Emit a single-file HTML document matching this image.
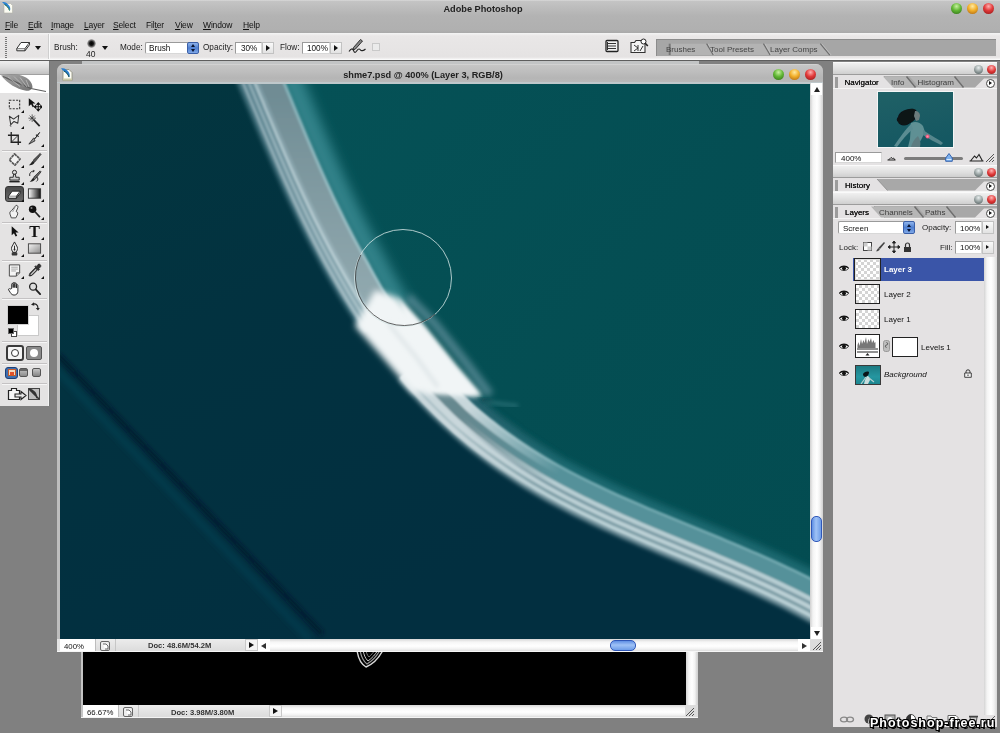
<!DOCTYPE html>
<html><head><meta charset="utf-8">
<style>
*{box-sizing:border-box;margin:0;padding:0}
html,body{width:1000px;height:733px;overflow:hidden;background:#808080;font-family:"Liberation Sans",sans-serif;font-size:10px;color:#111}
.a{position:absolute}
#top{left:0;top:0;width:1000px;height:33px;background:linear-gradient(#dadada 0,#c4c4c4 1.5px,#bcbcbc 8px,#b3b3b3 16px,#b0b0b0 30px,#a9a9a9 33px)}
#apptitle{left:383px;top:3.5px;width:200px;text-align:center;font-weight:bold;font-size:9.2px;color:#222}
.tl{width:11px;height:11px;border-radius:50%}
.tl.g{background:radial-gradient(circle at 50% 30%,#c8f0a0 0,#62b836 45%,#2c6a14 100%)}
.tl.y{background:radial-gradient(circle at 50% 30%,#ffe9a0 0,#f2b02c 45%,#a8600c 100%)}
.tl.r{background:radial-gradient(circle at 50% 30%,#ffb0b0 0,#e23a3a 45%,#8c1414 100%)}
.menu{top:20px;font-size:8.5px;color:#111;letter-spacing:-.15px}
.menu u{text-decoration:underline}
#opt{left:0;top:33px;width:1000px;height:27px;background:linear-gradient(#f4f4f4 0,#e9e7e7 3px,#e5e3e3 24px,#f4f4f4 26px,#fff 27px);}
#optline{left:0;top:60px;width:1000px;height:1px;background:#5e5e5e}
#strip{left:82px;top:61px;width:617px;height:4px;background:#c2c4c5}
.lbl{font-size:8.2px;color:#222}
.inp{background:#fff;border:1px solid #9a9a9a;border-right-color:#d8d8d8;border-bottom-color:#d8d8d8;font-size:8.2px;color:#111}
.abtn{background:linear-gradient(#fafafa,#e2e2e2);border:1px solid #c2c2c2}
.tri-r{width:0;height:0;border-left:4px solid #111;border-top:3px solid transparent;border-bottom:3px solid transparent}
.tri-d{width:0;height:0;border-top:4px solid #111;border-left:3.5px solid transparent;border-right:3.5px solid transparent}
</style></head><body><div id="root" style="position:absolute;left:0;top:0;width:1000px;height:733px;overflow:hidden;will-change:transform;transform:translateZ(0)">
<!-- top bar -->
<div id="top" class="a"></div>
<div id="apptitle" class="a">Adobe Photoshop</div>
<div class="a tl g" style="left:951px;top:3px"></div>
<div class="a tl y" style="left:967px;top:3px"></div>
<div class="a tl r" style="left:983px;top:3px"></div>
<svg class="a" style="left:1px;top:1px" width="13" height="13" viewBox="0 0 13 13"><path d="M3 2.500h6.500l2 2v7.500H3z" fill="#fbfbf2" stroke="#b4b4a8" stroke-width=".6"/><path d="M1 1c3-.6 5.500 1 7.500 4 1 2 1 3.500.3 4.500C8 7 6 5 4 4 3 3 2 2 1 1z" fill="#2a82d4"/><path d="M3.500 3.500c2 1 4 3 5 6" stroke="#176a4a" stroke-width="1" fill="none"/></svg>
<div class="a menu" style="left:5px"><u>F</u>ile</div>
<div class="a menu" style="left:28px"><u>E</u>dit</div>
<div class="a menu" style="left:51px"><u>I</u>mage</div>
<div class="a menu" style="left:84px"><u>L</u>ayer</div>
<div class="a menu" style="left:113px"><u>S</u>elect</div>
<div class="a menu" style="left:146px">Fil<u>t</u>er</div>
<div class="a menu" style="left:175px"><u>V</u>iew</div>
<div class="a menu" style="left:203px"><u>W</u>indow</div>
<div class="a menu" style="left:243px"><u>H</u>elp</div>
<!-- options bar -->
<div id="opt" class="a"></div>
<div id="optline" class="a"></div>
<div id="strip" class="a"></div>
<!-- options bar content -->
<div class="a" style="left:5px;top:37px;width:2px;height:21px;background:repeating-linear-gradient(#777 0,#777 1px,transparent 1px,transparent 2px)"></div>
<svg class="a" style="left:16px;top:41px" width="15" height="12" viewBox="0 0 15 12"><path d="M5 1.500h8.500l-4.500 6H.8z" fill="#fff" stroke="#333" stroke-width="1" stroke-linejoin="round"/><path d="M.8 7.500v2.300h8.200V7.500M9 9.800l4.500-6V1.500" fill="#ddd" stroke="#333" stroke-width="1" stroke-linejoin="round"/></svg>
<div class="a tri-d" style="left:35px;top:45.500px"></div>
<div class="a" style="left:48px;top:34px;width:1px;height:25px;background:#cfcfcf"></div><div class="a" style="left:49px;top:34px;width:1px;height:25px;background:#fafafa"></div>
<div class="a lbl" style="left:54px;top:42.500px">Brush:</div>
<div class="a" style="left:86.500px;top:38.500px;width:9px;height:9px;border-radius:50%;background:radial-gradient(circle,#000 0,#111 30%,rgba(60,60,60,.5) 60%,rgba(120,120,120,0) 75%)"></div>
<div class="a" style="left:86px;top:48.500px;font-size:8.500px;color:#222">40</div>
<div class="a tri-d" style="left:102px;top:45.500px"></div>
<div class="a lbl" style="left:120px;top:42.500px">Mode:</div>
<div class="a inp" style="left:145px;top:41.500px;width:54px;height:12.500px;border-radius:2px;padding:1px 0 0 3px">Brush</div>
<div class="a" style="left:187px;top:41.500px;width:12px;height:12.500px;border-radius:2px;background:linear-gradient(#8fb4ec,#4f7fd0 50%,#7fa8e8);border:1px solid #3a5fa8"></div>
<div class="a" style="left:190.500px;top:43.500px;width:0;height:0;border-bottom:3.500px solid #0a1430;border-left:2.500px solid transparent;border-right:2.500px solid transparent"></div>
<div class="a" style="left:190.500px;top:48.500px;width:0;height:0;border-top:3.500px solid #0a1430;border-left:2.500px solid transparent;border-right:2.500px solid transparent"></div>
<div class="a lbl" style="left:203px;top:42.500px">Opacity:</div>
<div class="a inp" style="left:235px;top:41.500px;width:27px;height:12.500px;padding:1px 0 0 5px">30%</div>
<div class="a abtn" style="left:262px;top:41.500px;width:12px;height:12.500px"></div><div class="a tri-r" style="left:266px;top:44.500px"></div>
<div class="a lbl" style="left:280px;top:42.500px">Flow:</div>
<div class="a inp" style="left:302px;top:41.500px;width:28px;height:12.500px;padding:1px 0 0 4px">100%</div>
<div class="a abtn" style="left:330px;top:41.500px;width:12px;height:12.500px"></div><div class="a tri-r" style="left:334px;top:44.500px"></div>
<svg class="a" style="left:348px;top:38px" width="19" height="16" viewBox="0 0 19 16"><path d="M12.500 1.500l2 1.500-7 8-2.500 1 .500-2.500z" fill="#888" stroke="#222" stroke-width=".9"/><path d="M1 13.500c2-3 3.500-3.500 4.500-1s2 2.500 3.500 0 3-1.500 3.500-.5 3 1 5-1" fill="none" stroke="#222" stroke-width="1.100"/></svg>
<div class="a" style="left:371.500px;top:43px;width:8px;height:8px;border:1px solid #c9c9c9;background:#ebebeb"></div>
<!-- right icons -->
<svg class="a" style="left:605px;top:39px" width="14" height="14" viewBox="0 0 14 14"><rect x="1" y="1.500" width="12" height="11" rx="1" fill="#f2f2f2" stroke="#222" stroke-width="1.300"/><path d="M3 4.500h8M3 7h8M3 9.500h8" stroke="#333" stroke-width="1.200"/><path d="M2.500 3v8" stroke="#333" stroke-width="1"/></svg>
<svg class="a" style="left:629px;top:37px" width="20" height="18" viewBox="0 0 20 18"><path d="M2 5.500h3.500l1.500-2h5l1.500 2H16v10H2z" fill="#f4f4f4" stroke="#333" stroke-width="1.100"/><path d="M5 8l4 3-4 3M9 8v6M11 14l3-5" stroke="#333" stroke-width="1" fill="none"/><circle cx="14.500" cy="4.500" r="2.500" fill="#fff" stroke="#222" stroke-width="1"/><path d="M16.200 6.200l2.600 2.800" stroke="#222" stroke-width="1.600"/></svg>
<!-- palette well -->
<div class="a" style="left:656px;top:39px;width:340px;height:17px;background:#a6a6a6;border-top:1px solid #8c8c8c;border-left:1px solid #8c8c8c"></div>
<svg class="a" style="left:656px;top:38px" width="340" height="18" viewBox="0 0 340 19">
<path d="M6 18V6h38l7 12z" fill="#b3b3b3"/>
<path d="M51 18l-7-12h60l7 12z" fill="#b3b3b3"/>
<path d="M111 18l-7-12h60l10 12z" fill="#b3b3b3"/>
<path d="M44 6l7 12M104 6l7 12M164 6l10 12" stroke="#6e6e6e" stroke-width="1.300"/>
<path d="M45.500 6l7 12M105.500 6l7 12M165.500 6l10 12" stroke="#c4c4c4" stroke-width=".8"/>
<rect x="4" y="6" width="2" height="12" fill="#777"/>
</svg>
<div class="a" style="left:666px;top:45px;font-size:8px;color:#444">Brushes</div>
<div class="a" style="left:710px;top:45px;font-size:8px;color:#444">Tool Presets</div>
<div class="a" style="left:770px;top:45px;font-size:8px;color:#444">Layer Comps</div>

<!-- toolbox -->
<div class="a" style="left:0;top:61px;width:50px;height:345px;background:#e4e3e3;border-right:1px solid #767878;box-shadow:inset -1px 0 0 #f2f2f2"></div>
<div class="a" style="left:0;top:61px;width:49px;height:14px;background:linear-gradient(#efefef,#dcdcdc 50%,#c2c2c2);border-bottom:1px solid #a0a0a0"></div>
<div class="a" style="left:0;top:75px;width:49px;height:18px;background:#fff"></div>
<svg class="a" style="left:0;top:74px" width="49" height="20" viewBox="0 0 49 20"><defs><linearGradient id="fg" x1="0" y1="0" x2="1" y2="1"><stop offset="0" stop-color="#9a9a9a"/><stop offset="1" stop-color="#5a5a5a"/></linearGradient><filter id="fb"><feGaussianBlur stdDeviation=".5"/></filter></defs><g filter="url(#fb)"><path d="M1 1.500c7-2.500 18-2 25 2 4 2.500 6.500 6 6.500 10l-1.500 2c-1.500 1.300-3.500 1.500-6 1C17 15 8 10 1 1.500z" fill="url(#fg)" fill-opacity=".85"/><path d="M3 2.500c8 3.500 18 8 28 12l15 3" stroke="#5e5e5e" stroke-width="1.200" fill="none"/><path d="M8 3l12 9.500M14 2.500l10 10M20 3.500l7 9.500M26 6l3 7" stroke="#c4c4c4" stroke-width=".7"/></g></svg>
<div class="a" style="left:2px;top:149.5px;width:45px;height:1px;background:#c4c2c3"></div><div class="a" style="left:2px;top:150.5px;width:45px;height:1px;background:#f6f6f6"></div>
<div class="a" style="left:2px;top:222.0px;width:45px;height:1px;background:#c4c2c3"></div><div class="a" style="left:2px;top:223.0px;width:45px;height:1px;background:#f6f6f6"></div>
<div class="a" style="left:2px;top:260.0px;width:45px;height:1px;background:#c4c2c3"></div><div class="a" style="left:2px;top:261.0px;width:45px;height:1px;background:#f6f6f6"></div>
<div class="a" style="left:2px;top:297.5px;width:45px;height:1px;background:#c4c2c3"></div><div class="a" style="left:2px;top:298.5px;width:45px;height:1px;background:#f6f6f6"></div>
<div class="a" style="left:2px;top:340.5px;width:45px;height:1px;background:#c4c2c3"></div><div class="a" style="left:2px;top:341.5px;width:45px;height:1px;background:#f6f6f6"></div>
<div class="a" style="left:2px;top:363.0px;width:45px;height:1px;background:#c4c2c3"></div><div class="a" style="left:2px;top:364.0px;width:45px;height:1px;background:#f6f6f6"></div>
<div class="a" style="left:2px;top:383.0px;width:45px;height:1px;background:#c4c2c3"></div><div class="a" style="left:2px;top:384.0px;width:45px;height:1px;background:#f6f6f6"></div>
<svg class="a" style="left:6.5px;top:96.5px" width="15" height="15" viewBox="0 0 16 16"><rect x="2.5" y="3.5" width="11" height="9" fill="none" stroke="#333" stroke-width="1.2" stroke-dasharray="2.2 1.4"/></svg>
<div class="a" style="left:20.5px;top:109.5px;width:0;height:0;border-bottom:3px solid #111;border-left:3px solid transparent"></div>
<svg class="a" style="left:26.5px;top:96.5px" width="15" height="15" viewBox="0 0 16 16"><path d="M2 1.5v9l2.6-2.4 1.8 3.4 1.6-.8-1.7-3.3h3.2z" fill="#111" transform="translate(0,0) scale(.95)"/><path d="M12 7v7M8.5 10.5h7M12 6.2l-1.4 1.6h2.8zM12 14.8l-1.4-1.6h2.8zM7.7 10.5l1.6-1.4v2.8zM16.3 10.5l-1.6-1.4v2.8z" stroke="#111" stroke-width="1.1" fill="#111"/></svg>
<svg class="a" style="left:6.5px;top:112.5px" width="15" height="15" viewBox="0 0 16 16"><path d="M2.5 3.5l4.5 3 5.5-4-1 8.5-4-2-3.5 3.5z" fill="#e8e8e8" stroke="#333" stroke-width="1.1" stroke-linejoin="round"/><path d="M4 12.5c-1 .8-.6 2 .6 1.6" fill="none" stroke="#333" stroke-width=".9"/></svg>
<div class="a" style="left:20.5px;top:125.5px;width:0;height:0;border-bottom:3px solid #111;border-left:3px solid transparent"></div>
<svg class="a" style="left:26.5px;top:112.5px" width="15" height="15" viewBox="0 0 16 16"><path d="M7 7l6.5 7" stroke="#222" stroke-width="1.8"/><path d="M5.5 1.5v8M1.5 5.5h8M2.8 2.8l5.4 5.4M8.2 2.8l-5.4 5.4" stroke="#333" stroke-width=".8"/></svg>
<svg class="a" style="left:6.5px;top:131.0px" width="15" height="15" viewBox="0 0 16 16"><path d="M4.5 1v11h10.5M1 4.5h11v10.5" fill="none" stroke="#222" stroke-width="1.4"/><path d="M4.5 12L12 4.5" stroke="#222" stroke-width=".9"/></svg>
<svg class="a" style="left:26.5px;top:131.0px" width="15" height="15" viewBox="0 0 16 16"><path d="M13.5 1.5L8.5 8l-1.6-.4L2 14l6.5-3.5-.6-1.6z" fill="#999" stroke="#222" stroke-width=".9" stroke-linejoin="round"/><path d="M9.5 4l3 2" stroke="#222" stroke-width="1.2"/></svg>
<div class="a" style="left:40.5px;top:144.0px;width:0;height:0;border-bottom:3px solid #111;border-left:3px solid transparent"></div>
<svg class="a" style="left:6.5px;top:152.0px" width="15" height="15" viewBox="0 0 16 16"><path d="M8 2l6 5.5-5.5 6.5-6-5.5z" fill="#f2f2f2" stroke="#555" stroke-width="1.8" stroke-linejoin="round" stroke-dasharray="3 .6"/></svg>
<div class="a" style="left:20.5px;top:165.0px;width:0;height:0;border-bottom:3px solid #111;border-left:3px solid transparent"></div>
<svg class="a" style="left:26.5px;top:152.0px" width="15" height="15" viewBox="0 0 16 16"><path d="M14 1.5l1 1-6.5 8-2-1.6z" fill="#555" stroke="#222" stroke-width=".8"/><path d="M6.3 9.2l2 1.8c-1 2.3-3.6 3.4-6.3 3 1.8-1 2.4-3.2 4.3-4.8z" fill="#222"/></svg>
<div class="a" style="left:40.5px;top:165.0px;width:0;height:0;border-bottom:3px solid #111;border-left:3px solid transparent"></div>
<svg class="a" style="left:6.5px;top:169.0px" width="15" height="15" viewBox="0 0 16 16"><circle cx="8" cy="3.6" r="2.2" fill="#ddd" stroke="#222" stroke-width="1"/><path d="M7 5.6h2l.4 3.2h3.6v3H3v-3h3.6z" fill="#ccc" stroke="#222" stroke-width="1"/><path d="M2.5 13.5h11" stroke="#222" stroke-width="1.6"/></svg>
<div class="a" style="left:20.5px;top:182.0px;width:0;height:0;border-bottom:3px solid #111;border-left:3px solid transparent"></div>
<svg class="a" style="left:26.5px;top:169.0px" width="15" height="15" viewBox="0 0 16 16"><path d="M14 2l1 1-6 7.5-2-1.6z" fill="#666" stroke="#222" stroke-width=".8"/><path d="M6.8 9.4l1.8 1.6c-1 2-3.3 3-5.8 2.6 1.6-.9 2.2-2.8 4-4.2z" fill="#222"/><path d="M3 7.5c-.8-3 1.5-5.6 4.6-5.2l-.6-1.3M7.6 2.3L6.2 3.4" fill="none" stroke="#222" stroke-width="1"/><path d="M10.5 8.5c1.5 1 1.5 3.5-.5 4.8" fill="none" stroke="#222" stroke-width="1"/></svg>
<div class="a" style="left:40.5px;top:182.0px;width:0;height:0;border-bottom:3px solid #111;border-left:3px solid transparent"></div>
<div class="a" style="left:4.5px;top:185.5px;width:19px;height:16px;border-radius:3px;background:linear-gradient(#4a4a4a,#6a6a6a);border:1px solid #333"></div>
<svg class="a" style="left:6.5px;top:186.0px" width="15" height="15" viewBox="0 0 16 16"><path d="M5.5 5.5h8.5l-4 5.5H1.5z" fill="#fff" stroke="#222" stroke-width="1" stroke-linejoin="round"/><path d="M1.5 11v2.2h8.5V11M10 13.2l4-5.5V5.5" fill="#d8d8d8" stroke="#222" stroke-width="1" stroke-linejoin="round"/></svg>
<div class="a" style="left:20.5px;top:199.0px;width:0;height:0;border-bottom:3px solid #111;border-left:3px solid transparent"></div>
<svg class="a" style="left:26.5px;top:186.0px" width="15" height="15" viewBox="0 0 16 16"><defs><linearGradient id="tg"><stop offset="0" stop-color="#fff"/><stop offset="1" stop-color="#111"/></linearGradient></defs><rect x="1.5" y="3" width="13" height="10" fill="url(#tg)" stroke="#333" stroke-width="1"/></svg>
<div class="a" style="left:40.5px;top:199.0px;width:0;height:0;border-bottom:3px solid #111;border-left:3px solid transparent"></div>
<svg class="a" style="left:6.5px;top:203.5px" width="15" height="15" viewBox="0 0 16 16"><path d="M9.5 1.5c1.6-.4 2.6 1 2 2.6L9.8 8c1.8.6 2 2.2 1.2 3.8l-1.6 3H4.6l-1.4-4c-.5-1.6 0-3 1.6-3.6z" fill="#f2f2f2" stroke="#444" stroke-width="1"/><path d="M6 8.5l2.6-5.2" stroke="#888" stroke-width=".8"/></svg>
<div class="a" style="left:20.5px;top:216.5px;width:0;height:0;border-bottom:3px solid #111;border-left:3px solid transparent"></div>
<svg class="a" style="left:26.5px;top:203.5px" width="15" height="15" viewBox="0 0 16 16"><circle cx="6" cy="5.5" r="4" fill="#111"/><circle cx="4.8" cy="4.2" r="1.1" fill="#888"/><path d="M8.8 8.5l5 5.5" stroke="#222" stroke-width="1.8"/></svg>
<div class="a" style="left:40.5px;top:216.5px;width:0;height:0;border-bottom:3px solid #111;border-left:3px solid transparent"></div>
<svg class="a" style="left:6.5px;top:224.0px" width="15" height="15" viewBox="0 0 16 16"><path d="M5 2.5v9.5l2.400-2.200 1.800 3.600 1.700-.800-1.800-3.500h3.300z" fill="#111"/></svg>
<div class="a" style="left:20.5px;top:237.0px;width:0;height:0;border-bottom:3px solid #111;border-left:3px solid transparent"></div>
<svg class="a" style="left:26.5px;top:224.0px" width="15" height="15" viewBox="0 0 16 16"><text x="8" y="14" font-family="Liberation Serif" font-weight="bold" font-size="17" text-anchor="middle" fill="#111">T</text></svg>
<div class="a" style="left:40.5px;top:237.0px;width:0;height:0;border-bottom:3px solid #111;border-left:3px solid transparent"></div>
<svg class="a" style="left:6.5px;top:241.0px" width="15" height="15" viewBox="0 0 16 16"><path d="M8 1l3 5.5c.6 2-.2 4-1.4 5.5H6.4C5.200 10.500 4.400 8.500 5 6.500z" fill="#f0f0f0" stroke="#222" stroke-width="1"/><path d="M8 5v5" stroke="#222" stroke-width="1"/><circle cx="8" cy="9" r="1" fill="#222"/><path d="M5.500 12.500h5v2.500h-5z" fill="#444" stroke="#222" stroke-width=".8"/></svg>
<div class="a" style="left:20.5px;top:254.0px;width:0;height:0;border-bottom:3px solid #111;border-left:3px solid transparent"></div>
<svg class="a" style="left:26.5px;top:241.0px" width="15" height="15" viewBox="0 0 16 16"><defs><linearGradient id="sg" x1="0" y1="0" x2="1" y2="1"><stop offset="0" stop-color="#f4f4f4"/><stop offset="1" stop-color="#8c8c8c"/></linearGradient></defs><rect x="1.500" y="3" width="13" height="10" fill="url(#sg)" stroke="#444" stroke-width="1"/></svg>
<div class="a" style="left:40.5px;top:254.0px;width:0;height:0;border-bottom:3px solid #111;border-left:3px solid transparent"></div>
<svg class="a" style="left:6.5px;top:263.0px" width="15" height="15" viewBox="0 0 16 16"><path d="M2.500 2h11v8.500l-3.500 3.500h-7.500z" fill="#f6f6f6" stroke="#444" stroke-width="1"/><path d="M13.500 10.500h-3.500v3.500" fill="#bbb" stroke="#444" stroke-width="1"/><path d="M4.500 4.500h7M4.500 6.500h7M4.500 8.500h5" stroke="#999" stroke-width=".9"/></svg>
<div class="a" style="left:20.5px;top:276.0px;width:0;height:0;border-bottom:3px solid #111;border-left:3px solid transparent"></div>
<svg class="a" style="left:26.5px;top:263.0px" width="15" height="15" viewBox="0 0 16 16"><path d="M12 1.300c1.500-.8 3.500 1.200 2.600 2.700l-2 2 .8.800-1.200 1.200-.8-.8-6 6-2.600.800-.600-.600.800-2.600 6-6-.8-.8 1.200-1.200.8.800z" fill="#333" stroke="#111" stroke-width=".6"/><path d="M9.200 6.300l-5.200 5.300-.4 1.300 1.300-.4 5.300-5.200z" fill="#ddd"/></svg>
<div class="a" style="left:40.5px;top:276.0px;width:0;height:0;border-bottom:3px solid #111;border-left:3px solid transparent"></div>
<svg class="a" style="left:6.5px;top:280.5px" width="15" height="15" viewBox="0 0 16 16"><path d="M5 8V3.400c0-1.200 1.600-1.200 1.600 0V7 2.400c0-1.200 1.700-1.200 1.700 0V7 3c0-1.200 1.700-1.200 1.700 0v4.500-2.800c0-1.200 1.600-1.200 1.600 0V11c0 2.400-1.600 4-4 4-2 0-3-1-4-2.600L1.800 9.600c-.7-1 .6-2 1.500-1z" fill="#fff" stroke="#222" stroke-width="1" stroke-linejoin="round"/></svg>
<svg class="a" style="left:26.5px;top:280.5px" width="15" height="15" viewBox="0 0 16 16"><circle cx="6.500" cy="6" r="3.700" fill="#ddd" stroke="#222" stroke-width="1.400"/><path d="M9.300 9l4.700 5" stroke="#222" stroke-width="2" stroke-linecap="round"/></svg>
<div class="a" style="left:17px;top:314.5px;width:22px;height:21px;background:#fff;border:1px solid #c9c9c9"></div>
<div class="a" style="left:8px;top:305.5px;width:20px;height:18.5px;background:#000;outline:1px solid #d0d0d0"></div>
<svg class="a" style="left:30px;top:301px" width="11" height="11" viewBox="0 0 11 11"><path d="M2.500 3.500c3-1.500 5.500 0 5.500 4" fill="none" stroke="#222" stroke-width="1.200"/><path d="M1 3.800l3-2.500.3 3.400zM8 9.500l-2.200-2.600 4 .2z" fill="#222"/></svg>
<div class="a" style="left:11px;top:330.5px;width:6px;height:6px;background:#fff;border:1px solid #444"></div><div class="a" style="left:8px;top:327.5px;width:6px;height:6px;background:#000;border:1px solid #666"></div>
<div class="a" style="left:5.500px;top:344.500px;width:18px;height:16px;border-radius:3px;background:#f4f4f4;border:2px solid #3a3a3a"></div><div class="a" style="left:10.500px;top:348.500px;width:8px;height:8px;border-radius:50%;border:1px solid #333;background:#fff"></div>
<div class="a" style="left:26px;top:345.500px;width:16px;height:14px;border-radius:2px;background:#8a8a8a;border:1px solid #555"></div><div class="a" style="left:30px;top:348.500px;width:8px;height:8px;border-radius:50%;background:#fff"></div>
<div class="a" style="left:5px;top:366.500px;width:13px;height:12px;border-radius:3px;background:#3f6fae;border:1px solid #1c3f78"></div><div class="a" style="left:7.500px;top:369px;width:8px;height:7px;background:#f0d9c0;border:1px solid #c85a28"></div><div class="a" style="left:9.500px;top:371.500px;width:4px;height:3px;background:#e0502a"></div>
<div class="a" style="left:19px;top:368px;width:9px;height:9px;border-radius:2px;background:linear-gradient(#666 0,#666 2px,#b4b4b4 2px,#8c8c8c);border:1px solid #555"></div>
<div class="a" style="left:32px;top:368px;width:9px;height:9px;border-radius:2px;background:linear-gradient(#c4c4c4,#848484);border:1px solid #555"></div>
<svg class="a" style="left:7px;top:386px" width="36" height="16" viewBox="0 0 36 16"><path d="M1.500 4.500h3v-2h5v2h3v9h-11z" fill="#f4f4f4" stroke="#222" stroke-width="1.200"/><path d="M8 8h6V5.500l5 4-5 4V11H8z" fill="#e8e8e8" stroke="#222" stroke-width="1.100"/><rect x="21.500" y="2.500" width="11" height="11" fill="#bdbdbd" stroke="#444"/><path d="M22 3l10 10M22 3c4 1 7 4 8 9" stroke="#333" stroke-width="1.600" fill="none"/></svg>
<!-- main document window -->
<div class="a" style="left:57px;top:64px;width:766px;height:588px;background:#b9b9b9;border-radius:7px 7px 0 0;overflow:hidden">
  <div class="a" style="left:0;top:0;width:766px;height:20px;background:linear-gradient(#d8d8d8 0,#c5c5c5 1.5px,#bdbdbd 8px,#b5b5b5 14px,#b9b9b9 18px,#bfc8cb 18.5px,#bfc8cb 20px)"></div>
  <div class="a" style="left:0;top:5.5px;width:732px;text-align:center;font-weight:bold;font-size:9.2px;color:#222">shme7.psd @ 400% (Layer 3, RGB/8)</div>
  <div class="a tl g" style="left:716px;top:5px"></div>
  <div class="a tl y" style="left:732px;top:5px"></div>
  <div class="a tl r" style="left:748px;top:5px"></div>
  <!-- doc icon -->
  <svg class="a" style="left:3px;top:3px" width="14" height="15" viewBox="0 0 14 15"><path d="M3 2.5h6l3 3v8H3z" fill="#fdfdf4" stroke="#8a8a7a" stroke-width=".8"/><path d="M3 11.5h9v2H3z" fill="#c9c9a8"/><path d="M1 1.5c3-1 6 1 8 4 1 2 1 4 0 5-1-3-3-5-5-6-1-1-2-2-3-3z" fill="#2a7fd0"/><path d="M4 4c2 1 4 3 5 6" stroke="#1a4f4a" stroke-width="1" fill="none"/></svg>
  <!-- left border -->
  <div class="a" style="left:0;top:19px;width:3px;height:569px;background:#bdbdbd"></div>
  <!-- canvas -->
  <div class="a" style="left:3px;top:19.5px;width:750px;height:555.5px;overflow:hidden;background:#0a4355">
<svg class="a" style="left:0;top:0" width="750" height="556" viewBox="0 0 750 556">
<defs>
<linearGradient id="gdark" gradientUnits="userSpaceOnUse" x1="0" y1="0" x2="250" y2="556"><stop offset="0" stop-color="#03363f"/><stop offset="0.45" stop-color="#023240"/><stop offset="1" stop-color="#022f40"/></linearGradient>
<linearGradient id="gteal" gradientUnits="userSpaceOnUse" x1="250" y1="0" x2="750" y2="500"><stop offset="0" stop-color="#055156"/><stop offset="0.5" stop-color="#044e53"/><stop offset="1" stop-color="#034c51"/></linearGradient>
<filter id="b1" x="-10%" y="-10%" width="120%" height="120%"><feGaussianBlur stdDeviation="1.1"/></filter>
<filter id="b2" x="-10%" y="-10%" width="120%" height="120%"><feGaussianBlur stdDeviation="2"/></filter>
<filter id="b3" x="-10%" y="-10%" width="120%" height="120%"><feGaussianBlur stdDeviation="3"/></filter>
<filter id="b6" x="-10%" y="-10%" width="120%" height="120%"><feGaussianBlur stdDeviation="6"/></filter>
</defs>
<rect width="750" height="556" fill="url(#gdark)"/>
<path d="M185.1 -36.8 L187.6 -31.0 L190.2 -25.1 L192.7 -19.2 L195.2 -13.3 L197.7 -7.4 L200.2 -1.5 L202.7 4.4 L205.2 10.4 L207.7 16.3 L210.2 22.2 L212.6 28.1 L215.1 34.1 L217.6 40.0 L220.1 45.9 L222.6 51.8 L225.1 57.7 L227.6 63.6 L230.2 69.5 L232.7 75.4 L235.3 81.3 L237.9 87.2 L240.5 93.0 L243.2 98.9 L245.8 104.7 L248.5 110.5 L251.2 116.3 L254.0 122.1 L256.7 127.9 L259.5 133.6 L262.4 139.3 L265.2 145.0 L268.1 150.7 L271.0 156.4 L274.0 162.0 L277.0 167.6 L280.1 173.2 L283.1 178.7 L286.3 184.3 L289.4 189.8 L292.5 195.3 L295.7 200.7 L298.9 206.2 L302.1 211.6 L305.4 217.0 L308.7 222.3 L312.1 227.6 L315.6 232.9 L319.0 238.1 L322.6 243.3 L326.1 248.5 L329.8 253.6 L333.4 258.6 L337.2 263.7 L340.9 268.6 L344.7 273.6 L348.6 278.5 L352.5 283.3 L356.5 288.1 L360.5 292.8 L364.6 297.5 L368.7 302.2 L372.9 306.8 L377.1 311.3 L381.4 315.8 L385.7 320.2 L390.1 324.6 L394.5 328.9 L399.0 333.1 L403.6 337.2 L408.3 341.2 L413.0 345.1 L417.7 349.0 L422.6 352.9 L427.4 356.6 L432.3 360.3 L437.3 364.0 L442.3 367.6 L447.3 371.1 L452.4 374.5 L457.6 377.9 L462.7 381.3 L468.0 384.6 L473.2 387.8 L478.5 391.0 L483.9 394.1 L489.3 397.2 L494.7 400.2 L500.2 403.2 L505.7 406.2 L511.3 409.1 L516.9 411.9 L522.5 414.7 L528.2 417.5 L533.9 420.2 L539.6 423.0 L545.4 425.6 L551.2 428.3 L557.0 430.9 L562.9 433.5 L568.8 436.1 L574.7 438.7 L580.6 441.3 L586.6 443.8 L592.6 446.3 L598.6 448.8 L604.6 451.4 L610.7 453.9 L616.7 456.4 L622.8 458.9 L628.9 461.4 L635.0 463.9 L641.1 466.4 L647.2 469.0 L653.3 471.5 L659.4 474.1 L665.5 476.7 L671.6 479.3 L677.7 481.9 L683.8 484.5 L689.9 487.2 L695.9 489.9 L702.0 492.6 L708.0 495.3 L714.0 498.1 L720.0 501.0 L726.0 503.8 L731.9 506.7 L737.8 509.6 L743.7 512.6 L749.5 515.6 L755.3 518.7 L761.0 521.8 L766.7 525.0 L772.4 528.2 L778.0 531.5 L783.6 534.8 L789.1 538.2 L794.5 541.7 L799.9 545.2 L810 -60 L185.1 -60 Z" fill="url(#gteal)"/>
<g filter="url(#b2)"><path d="M-2 271 L262 550" stroke="#021c2a" stroke-width="5" stroke-opacity=".8" fill="none"/></g><g filter="url(#b3)"><path d="M-8 281 L250 556" stroke="#0e5568" stroke-width="5" stroke-opacity=".4" fill="none"/></g>
<g filter="url(#b6)"><path d="M201.9 -44.3 L204.5 -38.4 L207.0 -32.4 L209.6 -26.5 L212.1 -20.5 L214.6 -14.6 L217.0 -8.6 L219.5 -2.7 L222.0 3.3 L224.5 9.2 L226.9 15.1 L229.4 21.1 L231.8 27.0 L234.3 32.9 L236.8 38.8 L239.2 44.7 L241.7 50.6 L244.2 56.5 L246.7 62.3 L249.2 68.2 L251.8 74.0 L254.3 79.8 L256.9 85.6 L259.5 91.4 L262.1 97.2 L264.7 102.9 L267.4 108.6 L270.0 114.4 L272.7 120.0 L275.5 125.7 L278.2 131.3 L281.0 137.0 L283.9 142.5 L286.7 148.1 L289.6 153.6 L292.5 159.1 L295.5 164.6 L298.5 170.1 L301.5 175.5 L304.5 180.9 L307.5 186.3 L310.5 191.7 L313.6 197.1 L316.6 202.4 L319.8 207.7 L322.9 213.0 L326.2 218.2 L329.4 223.4 L332.7 228.5 L349.8 216.6 L346.7 211.5 L343.7 206.4 L340.7 201.3 L337.7 196.1 L334.8 190.9 L331.9 185.7 L329.1 180.4 L326.3 175.1 L323.5 169.8 L320.6 164.5 L317.7 159.2 L314.8 153.9 L311.9 148.6 L309.1 143.2 L306.3 137.8 L303.5 132.3 L300.8 126.9 L298.1 121.4 L295.4 115.8 L292.8 110.3 L290.1 104.7 L287.5 99.1 L284.9 93.4 L282.4 87.8 L279.8 82.1 L277.3 76.4 L274.8 70.6 L272.3 64.9 L269.8 59.1 L267.4 53.3 L264.9 47.5 L262.4 41.6 L260.0 35.8 L257.6 29.9 L255.1 24.0 L252.7 18.1 L250.3 12.2 L247.9 6.3 L245.4 0.3 L243.0 -5.6 L240.5 -11.6 L238.1 -17.6 L235.6 -23.6 L233.1 -29.6 L230.6 -35.6 L228.1 -41.6 L225.5 -47.6 L222.9 -53.6Z" fill="#4fa3ac" fill-opacity="0.6" /></g>
<g filter="url(#b2)"><path d="M165.3 -28.1 L167.9 -22.3 L170.4 -16.5 L172.9 -10.6 L175.5 -4.8 L178.0 1.1 L180.5 6.9 L183.0 12.8 L185.5 18.7 L188.0 24.6 L190.5 30.5 L193.0 36.5 L195.5 42.4 L198.0 48.3 L200.5 54.3 L203.1 60.2 L205.6 66.1 L208.2 72.1 L210.8 78.0 L213.4 84.0 L216.0 89.9 L218.7 95.8 L221.3 101.7 L224.0 107.7 L226.7 113.6 L229.5 119.5 L232.3 125.3 L235.1 131.2 L237.9 137.1 L240.8 142.9 L243.7 148.7 L246.6 154.5 L249.6 160.3 L252.6 166.1 L255.7 171.8 L258.8 177.6 L261.9 183.3 L265.1 188.9 L268.3 194.6 L271.6 200.2 L274.9 205.8 L278.2 211.4 L281.6 216.9 L285.1 222.4 L288.5 227.9 L292.1 233.3 L295.6 238.7 L299.3 244.1 L303.0 249.4 L307.7 246.0 L304.1 240.7 L300.6 235.4 L297.0 230.0 L293.6 224.6 L290.1 219.2 L286.8 213.7 L283.4 208.2 L280.1 202.7 L276.9 197.1 L273.7 191.5 L270.5 185.9 L267.3 180.3 L264.2 174.6 L261.1 168.9 L258.1 163.2 L255.1 157.5 L252.2 151.7 L249.3 145.9 L246.4 140.1 L243.5 134.3 L240.7 128.5 L237.9 122.6 L235.2 116.8 L232.4 110.9 L229.7 105.0 L227.0 99.1 L224.4 93.2 L221.8 87.3 L219.2 81.4 L216.6 75.5 L214.0 69.6 L211.4 63.6 L208.9 57.7 L206.4 51.8 L203.8 45.8 L201.3 39.9 L198.8 34.0 L196.3 28.1 L193.8 22.1 L191.3 16.2 L188.9 10.3 L186.4 4.4 L183.9 -1.4 L181.4 -7.3 L178.8 -13.2 L176.3 -19.0 L173.8 -24.9 L171.2 -30.7Z" fill="#5b8794" fill-opacity="0.8" /></g>
<g filter="url(#b1)">
<path d="M168.7 -29.6 L171.2 -23.8 L173.8 -17.9 L176.3 -12.1 L178.8 -6.2 L181.3 -0.4 L183.8 5.5 L186.3 11.4 L188.8 17.3 L191.3 23.2 L193.8 29.1 L196.3 35.1 L198.8 41.0 L201.3 46.9 L203.9 52.8 L206.4 58.8 L208.9 64.7 L211.5 70.7 L214.1 76.6 L216.7 82.5 L219.3 88.4 L221.9 94.4 L224.6 100.3 L227.3 106.2 L230.0 112.1 L232.7 117.9 L235.5 123.8 L238.3 129.7 L241.1 135.5 L244.0 141.3 L246.9 147.1 L249.8 152.9 L252.8 158.7 L255.8 164.4 L258.8 170.2 L261.9 175.9 L265.0 181.5 L268.2 187.2 L271.4 192.8 L274.6 198.4 L277.9 204.0 L281.2 209.6 L284.5 215.1 L288.0 220.6 L291.4 226.0 L294.9 231.4 L298.5 236.8 L302.1 242.2 L305.7 247.5 L336.2 226.1 L332.9 221.0 L329.7 215.8 L326.5 210.6 L323.4 205.4 L320.3 200.1 L317.2 194.8 L314.2 189.5 L311.3 184.1 L308.3 178.7 L305.3 173.3 L302.3 167.9 L299.3 162.5 L296.4 157.0 L293.5 151.5 L290.6 146.0 L287.8 140.5 L285.0 134.9 L282.2 129.3 L279.5 123.7 L276.7 118.1 L274.1 112.4 L271.4 106.7 L268.7 101.0 L266.1 95.3 L263.5 89.5 L261.0 83.8 L258.4 78.0 L255.9 72.2 L253.3 66.3 L250.8 60.5 L248.3 54.7 L245.9 48.8 L243.4 42.9 L240.9 37.0 L238.5 31.1 L236.0 25.2 L233.6 19.3 L231.1 13.4 L228.6 7.4 L226.2 1.5 L223.7 -4.5 L221.3 -10.4 L218.8 -16.4 L216.3 -22.3 L213.8 -28.3 L211.2 -34.2 L208.7 -40.2 L206.1 -46.2Z" fill="#6f8c94" fill-opacity="1" />
<path d="M168.7 -29.6 L171.2 -23.8 L173.8 -17.9 L176.3 -12.1 L178.8 -6.2 L181.3 -0.4 L183.8 5.5 L186.3 11.4 L188.8 17.3 L191.3 23.2 L193.8 29.1 L196.3 35.1 L198.8 41.0 L201.3 46.9 L203.9 52.8 L206.4 58.8 L208.9 64.7 L211.5 70.7 L214.1 76.6 L216.7 82.5 L219.3 88.4 L221.9 94.4 L224.6 100.3 L227.3 106.2 L230.0 112.1 L232.7 117.9 L235.5 123.8 L238.3 129.7 L241.1 135.5 L244.0 141.3 L246.9 147.1 L249.8 152.9 L252.8 158.7 L255.8 164.4 L258.8 170.2 L261.9 175.9 L265.0 181.5 L268.2 187.2 L271.4 192.8 L274.6 198.4 L277.9 204.0 L281.2 209.6 L284.5 215.1 L288.0 220.6 L291.4 226.0 L294.9 231.4 L298.5 236.8 L302.1 242.2 L305.7 247.5 L317.3 239.3 L313.8 234.1 L310.4 228.8 L307.0 223.5 L303.6 218.1 L300.3 212.7 L297.0 207.3 L293.8 201.9 L290.6 196.4 L287.5 190.9 L284.3 185.4 L281.2 179.8 L278.1 174.3 L275.1 168.7 L272.1 163.0 L269.1 157.4 L266.1 151.7 L263.2 146.0 L260.4 140.3 L257.5 134.6 L254.7 128.8 L252.0 123.1 L249.2 117.3 L246.5 111.5 L243.8 105.6 L241.1 99.8 L238.5 94.0 L235.9 88.1 L233.3 82.2 L230.7 76.3 L228.1 70.4 L225.6 64.5 L223.0 58.6 L220.5 52.7 L218.0 46.8 L215.5 40.9 L213.0 35.0 L210.5 29.0 L208.1 23.1 L205.6 17.2 L203.1 11.3 L200.6 5.3 L198.1 -0.6 L195.6 -6.5 L193.1 -12.4 L190.6 -18.3 L188.1 -24.2 L185.5 -30.0 L183.0 -35.9Z" fill="#6a8d98" fill-opacity="1" />
<path d="M170.4 -30.3 L172.9 -24.5 L175.5 -18.7 L178.0 -12.8 L180.5 -7.0 L183.0 -1.1 L185.5 4.8 L188.0 10.7 L190.5 16.6 L193.0 22.5 L195.5 28.4 L198.0 34.3 L200.5 40.3 L203.0 46.2 L205.5 52.1 L208.1 58.1 L210.6 64.0 L213.2 69.9 L215.7 75.9 L218.3 81.8 L220.9 87.7 L223.6 93.6 L226.2 99.5 L228.9 105.4 L231.6 111.3 L234.3 117.2 L237.1 123.0 L239.9 128.9 L242.7 134.7 L245.6 140.5 L248.5 146.3 L251.4 152.1 L254.3 157.9 L257.3 163.6 L260.4 169.3 L263.4 175.0 L266.5 180.7 L269.7 186.3 L272.9 191.9 L276.1 197.5 L279.4 203.1 L282.7 208.6 L286.0 214.2 L289.4 219.6 L292.8 225.1 L296.3 230.5 L299.9 235.9 L303.4 241.2 L307.1 246.5" fill="none" stroke="#8aaab4" stroke-width="2.2" stroke-opacity="1" />
<path d="M172.9 -31.4 L175.4 -25.6 L178.0 -19.8 L180.5 -13.9 L183.0 -8.0 L185.5 -2.2 L188.0 3.7 L190.5 9.6 L193.0 15.5 L195.5 21.4 L198.0 27.4 L200.5 33.3 L203.0 39.2 L205.5 45.1 L208.0 51.1 L210.6 57.0 L213.1 62.9 L215.6 68.9 L218.2 74.8 L220.8 80.7 L223.4 86.6 L226.0 92.5 L228.7 98.4 L231.4 104.3 L234.1 110.2 L236.8 116.0 L239.5 121.9 L242.3 127.7 L245.1 133.5 L248.0 139.3 L250.8 145.1 L253.8 150.9 L256.7 156.6 L259.7 162.4 L262.7 168.1 L265.8 173.7 L268.9 179.4 L272.0 185.0 L275.2 190.6 L278.4 196.2 L281.6 201.8 L284.9 207.3 L288.2 212.8 L291.6 218.3 L295.0 223.7 L298.5 229.1 L302.0 234.5 L305.5 239.8 L309.1 245.1" fill="none" stroke="#5b8491" stroke-width="2.2" stroke-opacity="1" />
<path d="M175.4 -32.5 L178.0 -26.7 L180.5 -20.9 L183.0 -15.0 L185.6 -9.1 L188.1 -3.2 L190.6 2.6 L193.1 8.5 L195.5 14.5 L198.0 20.4 L200.5 26.3 L203.0 32.2 L205.5 38.1 L208.0 44.1 L210.5 50.0 L213.0 55.9 L215.6 61.9 L218.1 67.8 L220.7 73.7 L223.3 79.6 L225.9 85.5 L228.5 91.4 L231.1 97.3 L233.8 103.2 L236.5 109.0 L239.2 114.9 L241.9 120.7 L244.7 126.6 L247.5 132.4 L250.4 138.2 L253.2 143.9 L256.1 149.7 L259.1 155.4 L262.0 161.1 L265.0 166.8 L268.1 172.5 L271.2 178.1 L274.3 183.7 L277.5 189.3 L280.7 194.9 L283.9 200.4 L287.1 205.9 L290.4 211.4 L293.8 216.9 L297.2 222.3 L300.6 227.7 L304.1 233.0 L307.6 238.4 L311.2 243.6" fill="none" stroke="#8eadb6" stroke-width="2.4" stroke-opacity="1" />
<path d="M177.9 -33.7 L180.5 -27.8 L183.0 -22.0 L185.6 -16.1 L188.1 -10.2 L190.6 -4.3 L193.1 1.6 L195.6 7.5 L198.1 13.4 L200.5 19.3 L203.0 25.2 L205.5 31.2 L208.0 37.1 L210.5 43.0 L213.0 48.9 L215.5 54.9 L218.1 60.8 L220.6 66.7 L223.2 72.6 L225.7 78.5 L228.3 84.4 L230.9 90.3 L233.6 96.2 L236.2 102.1 L238.9 107.9 L241.6 113.8 L244.4 119.6 L247.1 125.4 L249.9 131.2 L252.8 137.0 L255.6 142.7 L258.5 148.5 L261.4 154.2 L264.4 159.9 L267.4 165.6 L270.4 171.2 L273.5 176.8 L276.6 182.4 L279.8 188.0 L282.9 193.5 L286.1 199.1 L289.4 204.6 L292.6 210.1 L295.9 215.5 L299.3 220.9 L302.7 226.3 L306.2 231.6 L309.7 236.9 L313.2 242.2" fill="none" stroke="#608894" stroke-width="2.0" stroke-opacity="1" />
<path d="M180.5 -34.8 L183.0 -28.9 L185.6 -23.1 L188.1 -17.2 L190.6 -11.3 L193.1 -5.4 L195.6 0.5 L198.1 6.4 L200.6 12.3 L203.1 18.2 L205.5 24.2 L208.0 30.1 L210.5 36.0 L213.0 41.9 L215.5 47.9 L218.0 53.8 L220.6 59.7 L223.1 65.6 L225.6 71.5 L228.2 77.4 L230.8 83.3 L233.4 89.2 L236.0 95.1 L238.7 100.9 L241.4 106.8 L244.1 112.6 L246.8 118.4 L249.5 124.2 L252.3 130.0 L255.1 135.8 L258.0 141.5 L260.9 147.3 L263.8 153.0 L266.7 158.6 L269.7 164.3 L272.7 169.9 L275.8 175.5 L278.9 181.1 L282.1 186.7 L285.2 192.2 L288.4 197.7 L291.6 203.2 L294.8 208.7 L298.1 214.1 L301.5 219.5 L304.8 224.9 L308.3 230.2 L311.8 235.5 L315.3 240.8" fill="none" stroke="#a6bfc6" stroke-width="3.0" stroke-opacity="1" />
<path d="M183.4 -36.1 L186.0 -30.2 L188.5 -24.3 L191.0 -18.5 L193.6 -12.6 L196.1 -6.7 L198.5 -0.8 L201.0 5.2 L203.5 11.1 L206.0 17.0 L208.5 22.9 L211.0 28.9 L213.4 34.8 L215.9 40.7 L218.4 46.6 L220.9 52.5 L223.5 58.5 L226.0 64.4 L228.5 70.3 L231.1 76.2 L233.7 82.0 L236.3 87.9 L238.9 93.8 L241.5 99.6 L244.2 105.5 L246.9 111.3 L249.6 117.1 L252.4 122.9 L255.1 128.6 L257.9 134.4 L260.8 140.1 L263.6 145.8 L266.5 151.5 L269.5 157.2 L272.5 162.8 L275.5 168.5 L278.5 174.0 L281.6 179.6 L284.7 185.1 L287.9 190.7 L291.0 196.2 L294.2 201.6 L297.4 207.1 L300.7 212.5 L304.0 217.9 L307.3 223.3 L310.7 228.6 L314.2 233.8 L317.7 239.1" fill="none" stroke="#7f9ca5" stroke-width="2.0" stroke-opacity="1" />
<path d="M205.3 -45.8 L207.8 -39.8 L210.4 -33.9 L212.9 -27.9 L215.4 -22.0 L217.9 -16.0 L220.4 -10.1 L222.9 -4.1 L225.3 1.8 L227.8 7.8 L230.3 13.7 L232.7 19.6 L235.2 25.6 L237.6 31.5 L240.1 37.4 L242.6 43.3 L245.0 49.1 L247.5 55.0 L250.0 60.9 L252.5 66.7 L255.0 72.5 L257.6 78.3 L260.1 84.1 L262.7 89.9 L265.3 95.7 L267.9 101.4 L270.6 107.1 L273.2 112.8 L275.9 118.5 L278.7 124.1 L281.4 129.7 L284.2 135.3 L287.0 140.9 L289.9 146.5 L292.7 152.0 L295.6 157.4 L298.6 162.9 L301.6 168.3 L304.6 173.7 L307.6 179.1 L310.5 184.5 L313.5 189.9 L316.5 195.3 L319.5 200.6 L322.6 205.9 L325.8 211.1 L329.0 216.3 L332.2 221.5 L335.5 226.6" fill="none" stroke="#86b1b8" stroke-width="3.0" stroke-opacity="1" />
<defs><linearGradient id="gw" gradientUnits="userSpaceOnUse" x1="0" y1="10" x2="0" y2="235"><stop offset="0" stop-color="#fff" stop-opacity="0"/><stop offset="1" stop-color="#e8f4f6" stop-opacity=".3"/></linearGradient></defs>
<path d="M167.4 -29.0 L170.0 -23.2 L172.5 -17.4 L175.0 -11.5 L177.6 -5.7 L180.1 0.2 L182.6 6.0 L185.1 11.9 L187.6 17.8 L190.1 23.7 L192.6 29.7 L195.1 35.6 L197.6 41.5 L200.1 47.4 L202.6 53.4 L205.1 59.3 L207.7 65.3 L210.3 71.2 L212.8 77.1 L215.4 83.1 L218.1 89.0 L220.7 94.9 L223.4 100.8 L226.1 106.7 L228.8 112.6 L231.5 118.5 L234.3 124.4 L237.1 130.2 L239.9 136.1 L242.8 141.9 L245.7 147.7 L248.6 153.5 L251.6 159.3 L254.6 165.1 L257.6 170.8 L260.7 176.5 L263.8 182.2 L267.0 187.8 L270.2 193.5 L273.5 199.1 L276.7 204.7 L280.1 210.2 L283.4 215.8 L286.9 221.2 L290.3 226.7 L293.8 232.1 L297.4 237.5 L301.0 242.9 L304.7 248.2 L336.2 226.1 L332.9 221.0 L329.7 215.8 L326.5 210.6 L323.4 205.4 L320.3 200.1 L317.2 194.8 L314.2 189.5 L311.3 184.1 L308.3 178.7 L305.3 173.3 L302.3 167.9 L299.3 162.5 L296.4 157.0 L293.5 151.5 L290.6 146.0 L287.8 140.5 L285.0 134.9 L282.2 129.3 L279.5 123.7 L276.7 118.1 L274.1 112.4 L271.4 106.7 L268.7 101.0 L266.1 95.3 L263.5 89.5 L261.0 83.8 L258.4 78.0 L255.9 72.2 L253.3 66.3 L250.8 60.5 L248.3 54.7 L245.9 48.8 L243.4 42.9 L240.9 37.0 L238.5 31.1 L236.0 25.2 L233.6 19.3 L231.1 13.4 L228.6 7.4 L226.2 1.5 L223.7 -4.5 L221.3 -10.4 L218.8 -16.4 L216.3 -22.3 L213.8 -28.3 L211.2 -34.2 L208.7 -40.2 L206.1 -46.2Z" fill="url(#gw)" fill-opacity="1" />
</g>
<g filter="url(#b3)"><path d="M364.6 273.0 L368.4 277.8 L372.2 282.4 L376.1 287.0 L380.0 291.6 L384.0 296.1 L388.0 300.6 L392.1 305.0 L396.2 309.4 L400.4 313.7 L404.6 317.9 L408.9 322.1 L413.4 326.1 L417.9 329.9 L422.5 333.7 L427.2 337.5 L431.9 341.1 L436.6 344.8 L441.4 348.3 L446.2 351.8 L451.1 355.3 L456.0 358.7 L461.0 362.0 L466.0 365.3 L471.0 368.5 L476.1 371.7 L481.2 374.8 L486.4 377.9 L491.7 380.9 L496.9 383.9 L502.3 386.8 L507.6 389.7 L513.0 392.5 L518.5 395.3 L524.0 398.1 L529.5 400.8 L535.1 403.5 L540.7 406.2 L546.3 408.8 L552.0 411.4 L557.7 414.1 L563.5 416.6 L569.3 419.2 L575.1 421.7 L581.0 424.3 L586.9 426.8 L592.8 429.3 L598.8 431.8 L604.7 434.3 L610.8 436.8 L616.8 439.3 L622.8 441.7 L628.9 444.2 L635.0 446.7 L641.1 449.2 L647.2 451.8 L653.4 454.3 L659.5 456.8 L665.7 459.4 L671.8 462.0 L678.0 464.6 L684.1 467.2 L690.3 469.8 L696.4 472.5 L702.5 475.2 L708.7 477.9 L714.8 480.7 L720.9 483.5 L727.0 486.4 L733.1 489.3 L739.1 492.2 L745.1 495.2 L751.1 498.2 L757.1 501.3 L763.0 504.4 L768.9 507.6 L774.8 510.8 L780.6 514.1 L786.4 517.5 L792.1 520.9 L797.8 524.4 L803.4 527.9 L809.0 531.5 L815.8 521.3 L810.1 517.6 L804.3 514.0 L798.5 510.4 L792.6 506.9 L786.7 503.5 L780.8 500.2 L774.8 496.9 L768.8 493.7 L762.8 490.5 L756.7 487.4 L750.6 484.3 L744.5 481.3 L738.4 478.4 L732.2 475.4 L726.1 472.6 L719.9 469.8 L713.7 467.0 L707.5 464.2 L701.3 461.5 L695.1 458.8 L688.9 456.2 L682.7 453.5 L676.5 450.9 L670.3 448.3 L664.2 445.8 L658.0 443.2 L651.8 440.7 L645.7 438.2 L639.6 435.7 L633.5 433.2 L627.4 430.8 L621.4 428.3 L615.3 425.8 L609.4 423.4 L603.4 420.9 L597.5 418.4 L591.5 415.9 L585.7 413.4 L579.9 410.9 L574.1 408.4 L568.3 405.9 L562.6 403.4 L556.9 400.8 L551.3 398.2 L545.7 395.6 L540.2 393.0 L534.7 390.3 L529.3 387.7 L523.9 385.0 L518.5 382.3 L513.2 379.5 L507.9 376.7 L502.7 373.9 L497.5 371.0 L492.4 368.0 L487.3 365.0 L482.2 362.0 L477.2 358.9 L472.3 355.8 L467.4 352.6 L462.5 349.4 L457.7 346.1 L452.9 342.7 L448.2 339.3 L443.5 335.9 L438.9 332.4 L434.3 328.8 L429.7 325.2 L425.2 321.5 L420.7 317.7 L416.3 313.9 L412.2 309.7 L408.1 305.5 L404.1 301.3 L400.1 296.9 L396.2 292.6 L392.3 288.2 L388.5 283.7 L384.7 279.2 L381.0 274.6 L377.3 270.0 L373.7 265.3Z" fill="#2f7f88" fill-opacity="0.55" /></g>
<g filter="url(#b2)"><path d="M338.0 295.6 L342.2 300.5 L346.5 305.3 L350.8 310.1 L355.1 314.8 L359.5 319.5 L364.0 324.1 L368.5 328.7 L373.1 333.2 L377.7 337.6 L382.3 342.0 L387.1 346.3 L391.8 350.5 L396.6 354.7 L401.5 358.9 L406.4 362.9 L411.4 366.9 L416.4 370.8 L421.5 374.7 L426.6 378.5 L431.7 382.3 L436.9 385.9 L442.2 389.6 L447.5 393.1 L452.8 396.6 L458.2 400.1 L463.6 403.4 L469.1 406.8 L474.6 410.0 L480.1 413.2 L485.7 416.4 L491.3 419.5 L497.0 422.5 L502.7 425.5 L508.4 428.5 L514.1 431.4 L519.9 434.3 L525.7 437.1 L531.6 439.9 L537.4 442.7 L543.3 445.4 L549.2 448.1 L555.2 450.8 L561.1 453.4 L567.1 456.0 L573.1 458.6 L579.1 461.2 L585.2 463.8 L591.2 466.3 L597.3 468.9 L603.3 471.4 L609.4 473.9 L615.5 476.5 L621.5 479.0 L627.6 481.5 L633.7 484.1 L639.8 486.6 L645.8 489.2 L651.9 491.8 L658.0 494.3 L664.0 496.9 L670.0 499.5 L676.0 502.2 L682.0 504.8 L688.0 507.5 L694.0 510.2 L699.9 512.9 L705.8 515.7 L711.6 518.4 L717.5 521.3 L723.3 524.1 L729.0 527.0 L734.7 529.9 L740.4 532.9 L746.0 535.9 L751.6 538.9 L757.1 542.0 L762.6 545.1 L768.0 548.3 L773.3 551.5 L778.6 554.8 L783.8 558.1 L788.9 561.5 L792.1 556.8 L786.9 553.3 L781.6 550.0 L776.3 546.7 L770.9 543.4 L765.4 540.2 L759.9 537.0 L754.3 533.9 L748.7 530.9 L743.0 527.8 L737.3 524.9 L731.6 521.9 L725.8 519.0 L719.9 516.2 L714.1 513.3 L708.2 510.5 L702.3 507.8 L696.3 505.1 L690.3 502.3 L684.3 499.7 L678.3 497.0 L672.3 494.4 L666.2 491.8 L660.2 489.2 L654.1 486.6 L648.0 484.0 L641.9 481.5 L635.9 478.9 L629.8 476.4 L623.7 473.9 L617.6 471.4 L611.5 468.8 L605.5 466.3 L599.4 463.8 L593.4 461.2 L587.3 458.7 L581.3 456.1 L575.3 453.6 L569.3 451.0 L563.4 448.4 L557.4 445.7 L551.5 443.1 L545.6 440.4 L539.7 437.7 L533.9 435.0 L528.1 432.2 L522.3 429.4 L516.6 426.5 L510.9 423.7 L505.2 420.7 L499.5 417.8 L493.9 414.7 L488.3 411.7 L482.8 408.6 L477.3 405.4 L471.8 402.2 L466.4 398.9 L461.0 395.5 L455.7 392.2 L450.4 388.7 L445.2 385.2 L440.0 381.6 L434.8 378.0 L429.7 374.3 L424.6 370.5 L419.6 366.7 L414.7 362.8 L409.7 358.9 L404.9 354.9 L400.0 350.8 L395.3 346.6 L390.5 342.5 L385.9 338.2 L381.3 333.8 L376.7 329.4 L372.3 324.9 L367.8 320.4 L363.4 315.8 L359.1 311.1 L354.8 306.4 L350.6 301.7 L346.4 296.9 L342.3 292.0Z" fill="#a3bcc3" fill-opacity="0.8" /></g>
<g filter="url(#b1)">
<path d="M340.5 293.6 L344.6 298.4 L348.8 303.3 L353.1 308.0 L357.4 312.7 L361.8 317.4 L366.2 322.0 L370.7 326.5 L375.2 331.0 L379.7 335.4 L384.4 339.8 L389.0 344.1 L393.8 348.3 L398.6 352.5 L403.4 356.6 L408.3 360.6 L413.3 364.6 L418.2 368.5 L423.3 372.3 L428.4 376.1 L433.5 379.8 L438.7 383.5 L443.9 387.1 L449.2 390.6 L454.5 394.1 L459.8 397.5 L465.2 400.8 L470.7 404.1 L476.1 407.4 L481.6 410.6 L487.2 413.7 L492.8 416.8 L498.4 419.8 L504.1 422.8 L509.8 425.7 L515.5 428.6 L521.3 431.5 L527.1 434.3 L532.9 437.1 L538.8 439.8 L544.6 442.5 L550.5 445.2 L556.5 447.9 L562.4 450.5 L568.4 453.1 L574.4 455.7 L580.4 458.3 L586.4 460.9 L592.4 463.4 L598.5 466.0 L604.6 468.5 L610.6 471.0 L616.7 473.5 L622.8 476.1 L628.9 478.6 L634.9 481.1 L641.0 483.7 L647.1 486.2 L653.2 488.8 L659.2 491.4 L665.3 494.0 L671.3 496.6 L677.3 499.2 L683.3 501.9 L689.3 504.5 L695.3 507.2 L701.2 510.0 L707.1 512.7 L713.0 515.5 L718.9 518.3 L724.7 521.2 L730.5 524.1 L736.2 527.0 L741.9 530.0 L747.6 533.0 L753.2 536.1 L758.7 539.2 L764.2 542.3 L769.6 545.5 L775.0 548.8 L780.3 552.0 L785.6 555.4 L790.8 558.8 L802.1 541.8 L796.7 538.2 L791.2 534.7 L785.7 531.3 L780.1 528.0 L774.4 524.7 L768.8 521.4 L763.0 518.3 L757.2 515.1 L751.4 512.0 L745.5 509.0 L739.6 506.0 L733.7 503.1 L727.7 500.2 L721.8 497.3 L715.7 494.5 L709.7 491.7 L703.7 488.9 L697.6 486.2 L691.5 483.5 L685.4 480.9 L679.3 478.2 L673.2 475.6 L667.1 473.0 L661.0 470.4 L654.9 467.9 L648.7 465.3 L642.6 462.8 L636.5 460.3 L630.4 457.7 L624.3 455.2 L618.3 452.7 L612.2 450.2 L606.2 447.7 L600.1 445.2 L594.1 442.7 L588.1 440.2 L582.2 437.6 L576.2 435.1 L570.3 432.5 L564.5 430.0 L558.6 427.4 L552.8 424.7 L547.0 422.1 L541.3 419.4 L535.6 416.7 L529.9 414.0 L524.2 411.2 L518.6 408.4 L513.1 405.6 L507.5 402.7 L502.1 399.8 L496.6 396.9 L491.2 393.9 L485.8 390.8 L480.5 387.7 L475.2 384.6 L470.0 381.4 L464.8 378.1 L459.7 374.8 L454.6 371.4 L449.5 368.0 L444.5 364.5 L439.5 360.9 L434.6 357.3 L429.7 353.7 L424.9 349.9 L420.1 346.1 L415.4 342.3 L410.7 338.4 L406.0 334.4 L401.4 330.4 L397.0 326.1 L392.6 321.8 L388.3 317.5 L384.0 313.1 L379.8 308.6 L375.7 304.1 L371.5 299.5 L367.5 294.9 L363.4 290.2 L359.5 285.5 L355.5 280.7Z" fill="#a5bdc3" fill-opacity="1" />
<path d="M354.9 281.3 L358.9 286.0 L362.9 290.8 L366.9 295.4 L371.0 300.1 L375.1 304.6 L379.3 309.2 L383.5 313.6 L387.8 318.0 L392.1 322.4 L396.5 326.7 L400.9 330.9 L405.5 335.0 L410.2 338.9 L414.9 342.9 L419.6 346.7 L424.4 350.5 L429.3 354.3 L434.1 357.9 L439.1 361.5 L444.0 365.1 L449.1 368.6 L454.1 372.0 L459.2 375.4 L464.4 378.7 L469.6 382.0 L474.8 385.2 L480.1 388.4 L485.4 391.5 L490.8 394.5 L496.2 397.6 L501.7 400.5 L507.2 403.4 L512.7 406.3 L518.3 409.1 L523.9 411.9 L529.5 414.7 L535.2 417.4 L540.9 420.1 L546.7 422.8 L552.5 425.4 L558.3 428.1 L564.1 430.7 L570.0 433.2 L575.9 435.8 L581.9 438.4 L587.8 440.9 L593.8 443.4 L599.8 445.9 L605.8 448.4 L611.9 450.9 L618.0 453.5 L624.0 456.0 L630.1 458.5 L636.2 461.0 L642.3 463.5 L648.4 466.0 L654.5 468.6 L660.7 471.2 L666.8 473.7 L672.9 476.3 L679.0 478.9 L685.1 481.6 L691.2 484.3 L697.3 486.9 L703.3 489.7 L709.4 492.4 L715.4 495.2 L721.4 498.0 L727.4 500.9 L733.3 503.8 L739.3 506.7 L745.2 509.7 L751.0 512.8 L756.8 515.8 L762.6 519.0 L768.4 522.2 L774.0 525.4 L779.7 528.7 L785.3 532.0 L790.8 535.4 L796.3 538.9 L801.7 542.4 L811.3 528.1 L805.6 524.5 L800.0 520.9 L794.2 517.4 L788.5 513.9 L782.6 510.6 L776.8 507.3 L770.9 504.0 L765.0 500.8 L759.0 497.7 L753.0 494.6 L747.0 491.6 L740.9 488.6 L734.8 485.6 L728.7 482.7 L722.6 479.9 L716.5 477.1 L710.4 474.3 L704.2 471.5 L698.0 468.8 L691.9 466.2 L685.7 463.5 L679.5 460.9 L673.4 458.3 L667.2 455.7 L661.1 453.1 L654.9 450.6 L648.8 448.1 L642.6 445.6 L636.5 443.1 L630.4 440.6 L624.4 438.1 L618.3 435.6 L612.3 433.1 L606.3 430.6 L600.3 428.2 L594.3 425.7 L588.4 423.2 L582.5 420.7 L576.7 418.1 L570.9 415.6 L565.1 413.1 L559.3 410.5 L553.6 407.9 L548.0 405.3 L542.4 402.6 L536.8 400.0 L531.2 397.3 L525.7 394.6 L520.3 391.9 L514.8 389.1 L509.5 386.3 L504.1 383.4 L498.8 380.5 L493.6 377.6 L488.4 374.6 L483.3 371.6 L478.1 368.5 L473.1 365.3 L468.1 362.1 L463.1 358.9 L458.2 355.6 L453.3 352.2 L448.4 348.8 L443.7 345.3 L438.9 341.8 L434.2 338.2 L429.5 334.6 L424.9 330.9 L420.4 327.1 L415.8 323.3 L411.4 319.4 L407.1 315.2 L403.0 311.0 L398.8 306.7 L394.8 302.3 L390.7 297.9 L386.8 293.5 L382.8 289.0 L379.0 284.4 L375.1 279.8 L371.3 275.2 L367.6 270.5Z" fill="#55919a" fill-opacity="1" />
<path d="M342.3 292.0 L346.4 296.9 L350.6 301.7 L354.8 306.4 L359.1 311.1 L363.4 315.8 L367.8 320.4 L372.3 324.9 L376.7 329.4 L381.3 333.8 L385.9 338.2 L390.5 342.5 L395.3 346.6 L400.0 350.8 L404.9 354.9 L409.7 358.9 L414.7 362.8 L419.6 366.7 L424.6 370.5 L429.7 374.3 L434.8 378.0 L440.0 381.6 L445.2 385.2 L450.4 388.7 L455.7 392.2 L461.0 395.5 L466.4 398.9 L471.8 402.2 L477.3 405.4 L482.8 408.6 L488.3 411.7 L493.9 414.7 L499.5 417.8 L505.2 420.7 L510.9 423.7 L516.6 426.5 L522.3 429.4 L528.1 432.2 L533.9 435.0 L539.7 437.7 L545.6 440.4 L551.5 443.1 L557.4 445.7 L563.4 448.4 L569.3 451.0 L575.3 453.6 L581.3 456.1 L587.3 458.7 L593.4 461.2 L599.4 463.8 L605.5 466.3 L611.5 468.8 L617.6 471.4 L623.7 473.9 L629.8 476.4 L635.9 478.9 L641.9 481.5 L648.0 484.0 L654.1 486.6 L660.2 489.2 L666.2 491.8 L672.3 494.4 L678.3 497.0 L684.3 499.7 L690.3 502.3 L696.3 505.1 L702.3 507.8 L708.2 510.5 L714.1 513.3 L719.9 516.2 L725.8 519.0 L731.6 521.9 L737.3 524.9 L743.0 527.8 L748.7 530.9 L754.3 533.9 L759.9 537.0 L765.4 540.2 L770.9 543.4 L776.3 546.7 L781.6 550.0 L786.9 553.3 L792.1 556.8" fill="none" stroke="#b9d0d5" stroke-width="3" stroke-opacity="1" />
<path d="M345.0 289.7 L349.1 294.6 L353.2 299.4 L357.4 304.1 L361.6 308.8 L365.9 313.4 L370.3 318.0 L374.7 322.5 L379.1 326.9 L383.6 331.4 L388.2 335.7 L392.8 340.0 L397.5 344.1 L402.2 348.2 L407.0 352.3 L411.9 356.3 L416.7 360.2 L421.7 364.0 L426.7 367.8 L431.7 371.5 L436.8 375.2 L441.9 378.8 L447.1 382.4 L452.3 385.9 L457.6 389.3 L462.9 392.6 L468.2 396.0 L473.6 399.2 L479.0 402.4 L484.5 405.6 L490.0 408.7 L495.6 411.7 L501.2 414.7 L506.8 417.6 L512.4 420.5 L518.1 423.4 L523.9 426.2 L529.6 429.0 L535.4 431.8 L541.2 434.5 L547.1 437.2 L553.0 439.9 L558.9 442.5 L564.8 445.1 L570.7 447.7 L576.7 450.3 L582.7 452.9 L588.7 455.4 L594.7 457.9 L600.8 460.5 L606.8 463.0 L612.9 465.5 L619.0 468.1 L625.1 470.6 L631.2 473.1 L637.2 475.6 L643.3 478.2 L649.4 480.7 L655.5 483.3 L661.6 485.9 L667.7 488.5 L673.7 491.1 L679.8 493.7 L685.8 496.4 L691.8 499.0 L697.8 501.8 L703.8 504.5 L709.7 507.3 L715.6 510.1 L721.5 512.9 L727.4 515.8 L733.2 518.7 L739.0 521.6 L744.8 524.6 L750.5 527.6 L756.1 530.7 L761.7 533.8 L767.3 537.0 L772.8 540.2 L778.2 543.5 L783.6 546.9 L788.9 550.2 L794.2 553.7" fill="none" stroke="#7698a1" stroke-width="2.2" stroke-opacity="1" />
<path d="M347.7 287.4 L351.7 292.2 L355.8 297.0 L360.0 301.7 L364.2 306.4 L368.4 311.0 L372.7 315.6 L377.1 320.1 L381.5 324.5 L385.9 328.9 L390.4 333.2 L395.0 337.5 L399.7 341.6 L404.4 345.7 L409.2 349.7 L414.0 353.7 L418.8 357.5 L423.8 361.4 L428.7 365.1 L433.7 368.8 L438.8 372.5 L443.9 376.0 L449.0 379.5 L454.2 383.0 L459.4 386.4 L464.7 389.7 L470.0 393.0 L475.4 396.3 L480.8 399.4 L486.2 402.6 L491.7 405.6 L497.2 408.6 L502.8 411.6 L508.4 414.6 L514.0 417.4 L519.7 420.3 L525.4 423.1 L531.2 425.9 L536.9 428.6 L542.7 431.3 L548.6 434.0 L554.4 436.6 L560.3 439.3 L566.2 441.9 L572.2 444.5 L578.1 447.0 L584.1 449.6 L590.1 452.1 L596.1 454.7 L602.2 457.2 L608.2 459.7 L614.3 462.2 L620.4 464.8 L626.4 467.3 L632.5 469.8 L638.6 472.3 L644.7 474.9 L650.8 477.4 L656.9 480.0 L663.0 482.6 L669.1 485.2 L675.2 487.8 L681.2 490.4 L687.3 493.1 L693.3 495.7 L699.3 498.5 L705.3 501.2 L711.3 504.0 L717.2 506.8 L723.1 509.6 L729.0 512.5 L734.9 515.4 L740.7 518.4 L746.5 521.4 L752.2 524.4 L757.9 527.5 L763.5 530.7 L769.1 533.9 L774.7 537.1 L780.1 540.4 L785.6 543.7 L790.9 547.1 L796.2 550.6" fill="none" stroke="#bdd2d7" stroke-width="3" stroke-opacity="1" />
<path d="M350.4 285.1 L354.4 289.9 L358.5 294.7 L362.6 299.4 L366.7 304.0 L370.9 308.6 L375.2 313.2 L379.5 317.6 L383.8 322.1 L388.3 326.5 L392.7 330.8 L397.2 335.0 L401.9 339.1 L406.6 343.2 L411.3 347.1 L416.1 351.1 L420.9 354.9 L425.8 358.7 L430.8 362.4 L435.7 366.1 L440.8 369.7 L445.8 373.2 L450.9 376.7 L456.1 380.2 L461.3 383.5 L466.5 386.8 L471.8 390.1 L477.2 393.3 L482.5 396.5 L488.0 399.6 L493.4 402.6 L498.9 405.6 L504.4 408.6 L510.0 411.5 L515.6 414.3 L521.3 417.1 L527.0 419.9 L532.7 422.7 L538.4 425.4 L544.2 428.1 L550.0 430.8 L555.9 433.4 L561.7 436.0 L567.6 438.6 L573.6 441.2 L579.5 443.8 L585.5 446.3 L591.5 448.9 L597.5 451.4 L603.5 453.9 L609.6 456.4 L615.7 458.9 L621.7 461.5 L627.8 464.0 L633.9 466.5 L640.0 469.0 L646.1 471.6 L652.2 474.1 L658.3 476.7 L664.4 479.2 L670.5 481.8 L676.6 484.5 L682.7 487.1 L688.7 489.8 L694.8 492.4 L700.8 495.2 L706.8 497.9 L712.8 500.7 L718.8 503.5 L724.7 506.4 L730.6 509.2 L736.5 512.2 L742.4 515.1 L748.2 518.1 L753.9 521.2 L759.7 524.3 L765.3 527.5 L771.0 530.7 L776.5 533.9 L782.1 537.3 L787.5 540.6 L792.9 544.1 L798.3 547.5" fill="none" stroke="#7395a0" stroke-width="2.2" stroke-opacity="1" />
<path d="M353.4 282.5 L357.4 287.3 L361.4 292.1 L365.4 296.7 L369.6 301.4 L373.7 306.0 L377.9 310.5 L382.2 315.0 L386.5 319.4 L390.8 323.7 L395.2 328.0 L399.7 332.3 L404.3 336.4 L409.0 340.4 L413.7 344.3 L418.5 348.2 L423.3 352.0 L428.1 355.7 L433.0 359.4 L438.0 363.1 L443.0 366.6 L448.0 370.1 L453.1 373.6 L458.2 377.0 L463.4 380.3 L468.6 383.6 L473.8 386.8 L479.1 390.0 L484.5 393.1 L489.9 396.2 L495.3 399.2 L500.8 402.2 L506.3 405.1 L511.8 408.0 L517.4 410.9 L523.0 413.7 L528.7 416.4 L534.4 419.2 L540.1 421.9 L545.9 424.6 L551.7 427.2 L557.5 429.9 L563.3 432.5 L569.2 435.0 L575.1 437.6 L581.1 440.2 L587.1 442.7 L593.0 445.2 L599.1 447.8 L605.1 450.3 L611.1 452.8 L617.2 455.3 L623.3 457.8 L629.3 460.3 L635.4 462.8 L641.5 465.3 L647.7 467.9 L653.8 470.4 L659.9 473.0 L666.0 475.6 L672.1 478.2 L678.2 480.8 L684.3 483.4 L690.4 486.1 L696.4 488.8 L702.5 491.5 L708.5 494.3 L714.5 497.0 L720.5 499.9 L726.5 502.7 L732.4 505.6 L738.4 508.6 L744.2 511.5 L750.1 514.6 L755.9 517.6 L761.6 520.8 L767.3 523.9 L773.0 527.2 L778.6 530.4 L784.2 533.8 L789.7 537.2 L795.2 540.6 L800.6 544.1" fill="none" stroke="#b8cfd4" stroke-width="3.4" stroke-opacity="1" />
<path d="M366.7 271.2 L370.5 275.9 L374.3 280.6 L378.1 285.2 L382.0 289.8 L385.9 294.3 L389.9 298.7 L394.0 303.1 L398.1 307.5 L402.2 311.8 L406.4 316.0 L410.6 320.2 L415.1 324.1 L419.6 327.9 L424.2 331.7 L428.8 335.4 L433.5 339.1 L438.2 342.7 L443.0 346.2 L447.8 349.7 L452.6 353.1 L457.5 356.5 L462.5 359.8 L467.4 363.1 L472.5 366.3 L477.5 369.4 L482.7 372.5 L487.8 375.6 L493.0 378.6 L498.3 381.5 L503.6 384.4 L508.9 387.3 L514.3 390.1 L519.7 392.9 L525.2 395.6 L530.7 398.4 L536.3 401.0 L541.8 403.7 L547.5 406.3 L553.1 409.0 L558.8 411.6 L564.6 414.1 L570.4 416.7 L576.2 419.2 L582.1 421.7 L588.0 424.3 L593.9 426.7 L599.8 429.2 L605.8 431.7 L611.8 434.2 L617.9 436.7 L623.9 439.2 L630.0 441.7 L636.1 444.2 L642.2 446.7 L648.3 449.2 L654.4 451.7 L660.6 454.2 L666.7 456.8 L672.9 459.4 L679.1 462.0 L685.2 464.6 L691.4 467.3 L697.6 469.9 L703.7 472.6 L709.9 475.4 L716.0 478.2 L722.1 481.0 L728.2 483.8 L734.3 486.7 L740.4 489.7 L746.4 492.6 L752.4 495.7 L758.4 498.8 L764.4 501.9 L770.3 505.1 L776.2 508.3 L782.0 511.6 L787.8 515.0 L793.6 518.4 L799.3 521.9 L805.0 525.5 L810.6 529.1" fill="none" stroke="#7db2b8" stroke-width="2.5" stroke-opacity="0.8" />
</g>
<defs><linearGradient id="mg" gradientUnits="userSpaceOnUse" x1="395.0" y1="345.0" x2="490.0" y2="405.0"><stop offset="0" stop-color="#fff"/><stop offset="1" stop-color="#000"/></linearGradient><mask id="mk" maskUnits="userSpaceOnUse" x="0" y="0" width="750" height="556"><rect width="750" height="556" fill="url(#mg)"/></mask></defs>
<g mask="url(#mk)">
<g filter="url(#b3)"><path d="M366.1 271.7 L369.9 276.5 L373.7 281.1 L377.5 285.7 L381.4 290.3 L385.4 294.8 L389.4 299.3 L393.4 303.7 L397.5 308.0 L401.7 312.3 L405.9 316.6 L410.1 320.7 L414.6 324.7 L419.1 328.5 L423.7 332.3 L428.4 336.0 L433.0 339.7 L437.8 343.3 L442.5 346.8 L447.3 350.3 L452.2 353.8 L457.1 357.1 L462.0 360.4 L467.0 363.7 L472.0 366.9 L477.1 370.1 L482.3 373.2 L487.4 376.2 L492.6 379.2 L497.9 382.2 L503.2 385.1 L508.5 388.0 L513.9 390.8 L519.4 393.6 L524.8 396.3 L530.4 399.0 L535.9 401.7 L541.5 404.4 L547.1 407.1 L552.8 409.7 L558.5 412.3 L564.3 414.8 L570.1 417.4 L575.9 419.9 L581.8 422.5 L587.6 425.0 L591.9 415.2 L586.0 412.7 L580.2 410.2 L574.4 407.7 L568.6 405.2 L562.9 402.7 L557.3 400.1 L551.7 397.5 L546.1 394.9 L540.6 392.3 L535.1 389.6 L529.6 387.0 L524.2 384.3 L518.9 381.6 L513.5 378.8 L508.3 376.0 L503.0 373.2 L497.9 370.3 L492.7 367.4 L487.7 364.4 L482.6 361.4 L477.6 358.3 L472.7 355.2 L467.8 352.0 L462.9 348.8 L458.1 345.5 L453.4 342.1 L448.6 338.7 L444.0 335.3 L439.3 331.8 L434.7 328.2 L430.2 324.6 L425.7 320.9 L421.2 317.1 L416.8 313.3 L412.7 309.2 L408.6 305.0 L404.6 300.7 L400.7 296.4 L396.7 292.0 L392.9 287.6 L389.1 283.2 L385.3 278.6 L381.6 274.1 L377.9 269.5 L374.3 264.8Z" fill="#2a5f6b" fill-opacity="0.8" /></g>
<g filter="url(#b1)">
<path d="M339.9 294.1 L344.0 299.0 L348.2 303.8 L352.5 308.5 L356.8 313.3 L361.2 317.9 L365.6 322.5 L370.1 327.1 L374.6 331.5 L379.2 336.0 L383.9 340.3 L388.5 344.6 L393.3 348.9 L398.1 353.0 L402.9 357.1 L407.8 361.2 L412.8 365.2 L417.8 369.1 L422.8 372.9 L427.9 376.7 L433.1 380.4 L438.2 384.1 L443.5 387.7 L448.7 391.2 L454.1 394.7 L459.4 398.1 L464.8 401.5 L470.3 404.8 L475.7 408.0 L481.3 411.2 L486.8 414.4 L492.4 417.5 L498.1 420.5 L503.7 423.5 L509.4 426.4 L515.2 429.3 L520.9 432.2 L526.7 435.0 L532.6 437.8 L538.4 440.5 L544.3 443.3 L550.2 445.9 L556.1 448.6 L562.1 451.2 L568.1 453.9 L574.1 456.4 L580.3 442.0 L574.4 439.4 L568.4 436.8 L562.5 434.3 L556.7 431.6 L550.8 429.0 L545.0 426.3 L539.3 423.7 L533.5 420.9 L527.8 418.2 L522.2 415.4 L516.5 412.6 L510.9 409.7 L505.4 406.8 L499.8 403.9 L494.4 400.9 L488.9 397.9 L483.5 394.8 L478.1 391.7 L472.8 388.5 L467.6 385.2 L462.3 381.9 L457.1 378.6 L452.0 375.2 L446.9 371.7 L441.9 368.2 L436.8 364.6 L431.9 360.9 L427.0 357.2 L422.1 353.4 L417.3 349.6 L412.5 345.7 L407.8 341.8 L403.1 337.7 L398.5 333.7 L394.0 329.4 L389.5 325.1 L385.2 320.7 L380.8 316.3 L376.6 311.8 L372.3 307.3 L368.1 302.7 L364.0 298.1 L359.9 293.4 L355.9 288.6 L351.9 283.8Z" fill="#c9d7db" fill-opacity="1" />
<path d="M351.3 284.3 L355.3 289.1 L359.3 293.9 L363.4 298.6 L367.6 303.2 L371.8 307.8 L376.0 312.4 L380.3 316.8 L384.6 321.3 L389.0 325.6 L393.5 330.0 L398.0 334.2 L402.6 338.3 L407.3 342.3 L412.0 346.3 L416.8 350.2 L421.6 354.0 L426.5 357.8 L431.4 361.5 L436.4 365.2 L441.4 368.8 L446.5 372.3 L451.6 375.8 L456.7 379.2 L461.9 382.6 L467.2 385.9 L472.4 389.1 L477.8 392.3 L483.1 395.5 L488.5 398.6 L494.0 401.6 L499.5 404.6 L505.0 407.5 L510.6 410.4 L516.2 413.3 L521.8 416.1 L527.5 418.9 L533.2 421.6 L538.9 424.4 L544.7 427.1 L550.5 429.7 L556.4 432.4 L562.2 435.0 L568.1 437.6 L574.0 440.1 L580.0 442.7 L585.0 431.1 L579.1 428.6 L573.2 426.1 L567.3 423.5 L561.5 420.9 L555.7 418.3 L550.0 415.7 L544.3 413.1 L538.6 410.4 L533.0 407.7 L527.4 405.0 L521.8 402.2 L516.3 399.4 L510.8 396.6 L505.4 393.7 L500.0 390.8 L494.6 387.9 L489.3 384.9 L484.1 381.8 L478.8 378.7 L473.7 375.6 L468.5 372.4 L463.4 369.1 L458.4 365.8 L453.4 362.4 L448.4 359.0 L443.5 355.5 L438.7 351.9 L433.9 348.3 L429.1 344.7 L424.4 340.9 L419.7 337.1 L415.0 333.3 L410.4 329.4 L405.9 325.4 L401.6 321.2 L397.3 316.9 L393.1 312.6 L388.9 308.2 L384.7 303.8 L380.7 299.3 L376.6 294.8 L372.6 290.2 L368.7 285.5 L364.8 280.9 L361.0 276.1Z" fill="#66888f" fill-opacity="1" />
<path d="M360.4 276.6 L364.2 281.4 L368.1 286.1 L372.1 290.7 L376.1 295.3 L380.1 299.9 L384.2 304.3 L388.3 308.8 L392.5 313.2 L396.8 317.5 L401.1 321.8 L405.4 326.0 L410.0 330.0 L414.5 333.9 L419.2 337.7 L423.9 341.5 L428.6 345.2 L433.4 348.9 L438.2 352.5 L443.1 356.1 L448.0 359.6 L453.0 363.0 L458.0 366.4 L463.0 369.7 L468.1 373.0 L473.3 376.2 L478.4 379.4 L483.7 382.5 L488.9 385.5 L494.3 388.5 L499.6 391.5 L505.0 394.4 L510.5 397.3 L515.9 400.1 L521.5 402.9 L527.0 405.7 L532.6 408.4 L538.3 411.1 L544.0 413.8 L549.7 416.4 L555.4 419.0 L561.2 421.6 L567.0 424.2 L572.9 426.8 L578.8 429.3 L584.7 431.8 L588.7 422.4 L582.9 419.9 L577.0 417.4 L571.2 414.9 L565.4 412.3 L559.7 409.8 L554.0 407.2 L548.3 404.6 L542.7 401.9 L537.1 399.3 L531.6 396.6 L526.1 393.9 L520.6 391.2 L515.2 388.4 L509.8 385.6 L504.5 382.8 L499.2 379.9 L494.0 376.9 L488.8 373.9 L483.7 370.9 L478.6 367.8 L473.5 364.7 L468.5 361.5 L463.5 358.3 L458.6 355.0 L453.7 351.6 L448.9 348.2 L444.1 344.7 L439.4 341.2 L434.7 337.6 L430.0 334.0 L425.4 330.3 L420.8 326.5 L416.3 322.7 L411.9 318.8 L407.6 314.6 L403.5 310.4 L399.4 306.1 L395.3 301.8 L391.3 297.4 L387.3 292.9 L383.4 288.4 L379.5 283.9 L375.7 279.3 L371.9 274.6 L368.2 270.0Z" fill="#c8d7db" fill-opacity="1" />
<path d="M344.7 290.0 L348.8 294.8 L352.9 299.6 L357.1 304.4 L361.4 309.0 L365.7 313.7 L370.0 318.2 L374.4 322.8 L378.9 327.2 L383.4 331.6 L387.9 336.0 L392.5 340.3 L397.2 344.4 L402.0 348.5 L406.8 352.6 L411.6 356.6 L416.5 360.5 L421.5 364.3 L426.5 368.1 L431.5 371.9 L436.6 375.5 L441.7 379.1 L446.9 382.7 L452.1 386.2 L457.4 389.6 L462.7 393.0 L468.0 396.3 L473.4 399.5 L478.8 402.7 L484.3 405.9 L489.8 409.0 L495.4 412.0 L501.0 415.0 L506.6 418.0 L512.3 420.9 L518.0 423.8 L523.7 426.6 L529.5 429.4 L535.2 432.1 L541.1 434.9 L546.9 437.6 L552.8 440.2 L558.7 442.9 L564.6 445.5 L570.6 448.1 L576.6 450.7" fill="none" stroke="#a9bfc5" stroke-width="2.2" stroke-opacity="1" />
</g></g>
<g filter="url(#b3)"><path d="M295.0 242.0 L315.0 206.0 L336.0 213.0 L363.0 242.0 L396.0 283.0 L421.0 312.0 L352.0 308.0 L323.0 274.0Z" fill="#f1f5f6"/></g>
<g filter="url(#b3)"><path d="M348.0 213.0 L374.0 239.0 L406.0 279.0 L430.0 311.0" stroke="#5b8c97" stroke-width="9" stroke-opacity=".8" fill="none"/></g>
<g filter="url(#b2)"><path d="M337.0 212.0 L363.0 241.0 L396.0 282.0 L422.0 312.0 L368.0 308.0 Z" fill="#f1f5f6"/></g>
<g filter="url(#b2)"><path d="M328.0 239.0 L356.0 273.0 L378.0 303.0" stroke="#dfe5e8" stroke-width="4" fill="none" stroke-opacity=".9"/></g>
<g filter="url(#b2)"><path d="M426.0 318.0 L458.0 322.0" stroke="#5fa0a8" stroke-width="3" stroke-opacity=".45" fill="none"/><path d="M418.0 314.0 L432.0 318.0" stroke="#123f4b" stroke-width="3" stroke-opacity=".6" fill="none"/></g>
</svg>
  <svg class="a" style="left:0;top:0" width="750" height="556"><circle cx="343" cy="194" r="48.5" fill="none" stroke="#d6e6e6" stroke-width="0.9" stroke-opacity=".9"/><path d="M300.8 170.9 A48.5 48.5 0 0 0 375 230.3" fill="none" stroke="#2a2a2a" stroke-width="0.9" stroke-opacity=".8"/></svg>
  </div>
  <!-- v scrollbar -->
  <div class="a" style="left:753px;top:19px;width:13px;height:556px;background:linear-gradient(90deg,#cfcfcf 0,#f4f4f4 3px,#fff 7px,#f0f0f0 10px,#cfcfcf 13px)"></div>
  <div class="a" style="left:754px;top:19px;width:11px;height:12px;background:#fff"></div>
  <div class="a" style="left:756.5px;top:23px;width:0;height:0;border-bottom:5px solid #222;border-left:3.5px solid transparent;border-right:3.5px solid transparent"></div>
  <div class="a" style="left:754px;top:563px;width:11px;height:12px;background:#fff"></div>
  <div class="a" style="left:756.5px;top:567px;width:0;height:0;border-top:5px solid #222;border-left:3.5px solid transparent;border-right:3.5px solid transparent"></div>
  <div class="a" style="left:754px;top:452px;width:11px;height:26px;border-radius:5px;border:1.5px solid #2f57b8;background:linear-gradient(90deg,#5f8fe4 0,#9fc2f6 45%,#6d9ce8 100%)"></div>
  <!-- status bar -->
  <div class="a" style="left:0;top:575px;width:766px;height:12px;background:#e4e4e4"></div>
  <div class="a" style="left:3px;top:575px;width:35px;height:12px;background:#fff;font-size:7.8px;padding:2.5px 0 0 4px">400%</div>
  <div class="a" style="left:38px;top:575px;width:158px;height:12px;background:linear-gradient(#ececec,#dcdcdc);border-left:1px solid #bdbdbd"></div>
  <svg class="a" style="left:43px;top:576.5px" width="10" height="10" viewBox="0 0 10 10"><rect x=".5" y=".5" width="9" height="9" rx="1.5" fill="#eee" stroke="#666"/><path d="M3 3h3l2 2v3H5" fill="#fff" stroke="#444" stroke-width=".8"/></svg>
  <div class="a" style="left:58px;top:575px;width:1px;height:12px;background:#c6c6c6"></div>
  <div class="a" style="left:91px;top:577px;font-size:7.6px;font-weight:bold;color:#333">Doc: 48.6M/54.2M</div>
  <div class="a" style="left:188px;top:575px;width:13px;height:12px;background:#f4f4f4;border:1px solid #c8c8c8"></div>
  <div class="a" style="left:192px;top:578px;width:0;height:0;border-left:5px solid #111;border-top:3.5px solid transparent;border-bottom:3.5px solid transparent"></div>
  <!-- h scrollbar -->
  <div class="a" style="left:201px;top:575px;width:552px;height:12px;background:linear-gradient(#d6d6d6 0,#f6f6f6 3px,#fff 7px,#f2f2f2 10px,#d2d2d2 13px)"></div>
  <div class="a" style="left:201px;top:575px;width:12px;height:12px;background:#fff"></div>
  <div class="a" style="left:204px;top:578.5px;width:0;height:0;border-right:5px solid #333;border-top:3px solid transparent;border-bottom:3px solid transparent"></div>
  <div class="a" style="left:741px;top:575px;width:12px;height:12px;background:#fff"></div>
  <div class="a" style="left:745px;top:578.5px;width:0;height:0;border-left:5px solid #333;border-top:3px solid transparent;border-bottom:3px solid transparent"></div>
  <div class="a" style="left:553px;top:576px;width:26px;height:11px;border-radius:5px;border:1.5px solid #2f57b8;background:linear-gradient(#5f8fe4 0,#9fc2f6 45%,#6d9ce8 100%)"></div>
  <!-- grip -->
  <div class="a" style="left:753px;top:575px;width:13px;height:12px;background:#dcdcdc"></div>
  <svg class="a" style="left:754px;top:576px" width="11" height="11" viewBox="0 0 11 11"><path d="M2 10L10 2M5 10L10 5M8 10L10 8" stroke="#555" stroke-width="1"/></svg>
  <div class="a" style="left:0;top:587px;width:766px;height:1px;background:#f6f6f6"></div>
</div>

<!-- second doc window (behind) -->
<div class="a" style="left:81px;top:652px;width:617px;height:66px;background:#e4e4e4;overflow:hidden">
  <div class="a" style="left:0;top:0;width:2px;height:65px;background:#c4c4c4"></div>
  <div class="a" style="left:2px;top:0;width:603px;height:53px;background:#000"></div>
  <svg class="a" style="left:268px;top:0" width="46" height="22" viewBox="0 0 46 22"><g fill="none" stroke-linecap="round"><path d="M8 -2c1 8 4 14 9 17 7-3 13-9 17-17" stroke="#d8d8d8" stroke-width="1.400"/><path d="M11 -2c1 6 3 11 7 14 5-3 10-8 13-14" stroke="#9a9a9a" stroke-width="1.200"/><path d="M14 -2c1 5 2 8 5 11 4-3 7-6 10-11" stroke="#c8c8c8" stroke-width="1"/><path d="M17 -2c.5 3 1 5 3 7 2-2 4-4 6-7" stroke="#777" stroke-width="1"/></g></svg>
  <div class="a" style="left:605px;top:0;width:12px;height:53px;background:linear-gradient(90deg,#d4d4d4 0,#f6f6f6 3px,#fff 6px,#f2f2f2 9px,#d4d4d4 11px)"></div>
  <div class="a" style="left:2px;top:53px;width:613px;height:12px;background:#e6e6e6"></div>
  <div class="a" style="left:2px;top:53px;width:35px;height:12px;background:#fff;font-size:7.800px;padding:2.500px 0 0 4px">66.67%</div>
  <div class="a" style="left:37px;top:53px;width:158px;height:12px;background:linear-gradient(#ececec,#dcdcdc);border-left:1px solid #bdbdbd"></div>
  <svg class="a" style="left:42px;top:54.500px" width="10" height="10" viewBox="0 0 10 10"><rect x=".5" y=".5" width="9" height="9" rx="1.500" fill="#eee" stroke="#666"/><path d="M3 3h3l2 2v3H5" fill="#fff" stroke="#444" stroke-width=".8"/></svg>
  <div class="a" style="left:57px;top:53px;width:1px;height:12px;background:#c6c6c6"></div>
  <div class="a" style="left:90px;top:55.500px;font-size:7.600px;font-weight:bold;color:#333">Doc: 3.98M/3.80M</div>
  <div class="a" style="left:188px;top:53px;width:13px;height:12px;background:#f4f4f4;border:1px solid #c8c8c8"></div>
  <div class="a" style="left:192px;top:56px;width:0;height:0;border-left:5px solid #111;border-top:3.500px solid transparent;border-bottom:3.500px solid transparent"></div>
  <div class="a" style="left:201px;top:53px;width:403px;height:12px;background:linear-gradient(#d6d6d6 0,#f6f6f6 3px,#fff 7px,#f2f2f2 10px,#d2d2d2 13px)"></div>
  <div class="a" style="left:604px;top:53px;width:13px;height:12px;background:#dcdcdc"></div>
  <svg class="a" style="left:604px;top:54.500px" width="10" height="10" viewBox="0 0 10 10"><path d="M1 9L9 1M4 9L9 4M7 9L9 7" stroke="#555" stroke-width="1"/></svg>
  <div class="a" style="left:0;top:65px;width:617px;height:1px;background:#f4f4f4"></div>
</div>

<!-- right panels -->
<div class="a" style="left:833px;top:62px;width:164px;height:665px;background:#e4e2e3"></div>
<div class="a" style="left:833px;top:62px;width:164px;height:13px;background:linear-gradient(#f0f0f0,#dedede 60%,#cfcfcf);border-top:1px solid #fafafa;border-bottom:1px solid #9c9c9c"></div>
<div class="a" style="left:974px;top:64.5px;width:9px;height:9px;border-radius:50%;background:radial-gradient(circle at 50% 30%,#e8eeee 0,#8f9a9a 55%,#4a5555 100%)"></div>
<div class="a" style="left:986.5px;top:64.5px;width:9px;height:9px;border-radius:50%;background:radial-gradient(circle at 50% 30%,#ffb4b4 0,#e03838 50%,#8c1414 100%)"></div>
<div class="a" style="left:833px;top:75px;width:164px;height:14px;background:#e4e2e3"></div>
<svg class="a" style="left:833px;top:75px" width="164" height="14" viewBox="0 0 164 14"><path d="M51.0 1 H164 V3.5 H151 L142 12.5 H61.5 Z" fill="#a8a8a8"/><path d="M51.0 1 L61.5 12.5" stroke="#8a8a8a" stroke-width=".8"/><path d="M50.0 1.5 H73.0 L82.0 12.5 H60.0 Z" fill="#b6b6b6"/><path d="M73.5 1.5 L82.5 12.5" stroke="#6e6e6e" stroke-width="1.4"/><path d="M76.5 1.5 H121.0 L130.0 12.5 H86.5 Z" fill="#b6b6b6"/><path d="M121.5 1.5 L130.5 12.5" stroke="#6e6e6e" stroke-width="1.4"/><rect x="2" y="2" width="3" height="11" fill="#9c9c9c"/><path d="M0 13.5H164" stroke="#f4f4f4" stroke-width="1"/></svg>
<div class="a" style="left:844.5px;top:77.5px;font-size:8px;color:#111;text-shadow:0 0 .4px #111;">Navigator</div>
<div class="a" style="left:891.0px;top:77.5px;font-size:8px;color:#3c3c3c;">Info</div>
<div class="a" style="left:917.5px;top:77.5px;font-size:8px;color:#3c3c3c;">Histogram</div>
<div class="a" style="left:985.5px;top:79.0px;width:9px;height:9px;border-radius:50%;background:#fff;border:1px solid #444"></div><div class="a" style="left:989px;top:81.0px;width:0;height:0;border-left:3.5px solid #111;border-top:2.5px solid transparent;border-bottom:2.5px solid transparent"></div>
<div class="a" style="left:877px;top:91px;width:77px;height:57px;background:#f4f6f6"></div><svg class="a" style="left:878px;top:92px" width="75" height="55" viewBox="0 0 75 55"><defs><linearGradient id="ng" x1="0" y1="0" x2=".3" y2="1"><stop offset="0" stop-color="#1f6166"/><stop offset=".5" stop-color="#1b5c64"/><stop offset="1" stop-color="#155862"/></linearGradient><filter id="nb"><feGaussianBlur stdDeviation=".7"/></filter></defs><rect width="75" height="55" fill="url(#ng)"/><g filter="url(#nb)"><path d="M20 25c1-5 8-9 16-8 3 1 4 4 3 8-2 3-6 6-10 8-4 1-8 0-9-3-2-2-1-4 0-5z" fill="#0a1216"/><path d="M37 19c3 0 5 2 5 5l-1 4-3 1-2-5z" fill="#6c7c7c"/><path d="M33 31c4-2 9-1 12 3l2 6-4 8-5 7H30l2-8z" fill="#5f9094"/><path d="M33 32c-5 5-11 13-17 22l3 1c5-7 10-13 16-18z" fill="#5a8c92"/><path d="M45 38c5 3 10 7 16 10l4 3-2 2c-6-3-12-6-18-10z" fill="#56868c"/><path d="M40 44c2 3 3 7 2 11H33c1-4 3-8 7-11z" fill="#5d7c80"/></g><circle cx="49.500" cy="44.500" r="2" fill="#f0527a"/><circle cx="49.500" cy="44.500" r="1" fill="#ff9ab0"/></svg>
<div class="a inp" style="left:835px;top:152px;width:47px;height:11px;font-size:8px;padding:.5px 0 0 5px">400%</div>
<svg class="a" style="left:887px;top:154px" width="9" height="7" viewBox="0 0 9 7"><path d="M.5 6h8M1.500 6l2.500-2.500 1.500 1 1 -0.500 1.500 2" fill="none" stroke="#222" stroke-width="1"/></svg>
<div class="a" style="left:904px;top:156.500px;width:59px;height:3px;border-radius:1.500px;background:#7c7c7c"></div>
<svg class="a" style="left:944.500px;top:152.500px" width="8" height="9" viewBox="0 0 8 9"><path d="M4 .5L7.300 5v3.300H.7V5z" fill="#7fb2ee" stroke="#2a5aa8" stroke-width=".9"/><path d="M1.500 6.500h5" stroke="#d8ecff" stroke-width="1"/></svg>
<svg class="a" style="left:969px;top:153px" width="15" height="9" viewBox="0 0 15 9"><path d="M.5 8h14M1.500 8l4-5 2 2 2.500-3.500L13.500 8" fill="none" stroke="#222" stroke-width="1.100"/></svg>
<svg class="a" style="left:985px;top:153px" width="10" height="10" viewBox="0 0 10 10"><path d="M1 9L9 1M4 9L9 4M7 9L9 7" stroke="#555" stroke-width="1"/></svg>
<div class="a" style="left:833px;top:165px;width:164px;height:13px;background:linear-gradient(#f0f0f0,#dedede 60%,#cfcfcf);border-top:1px solid #fafafa;border-bottom:1px solid #9c9c9c"></div>
<div class="a" style="left:974px;top:167.5px;width:9px;height:9px;border-radius:50%;background:radial-gradient(circle at 50% 30%,#e8eeee 0,#8f9a9a 55%,#4a5555 100%)"></div>
<div class="a" style="left:986.5px;top:167.5px;width:9px;height:9px;border-radius:50%;background:radial-gradient(circle at 50% 30%,#ffb4b4 0,#e03838 50%,#8c1414 100%)"></div>
<div class="a" style="left:833px;top:178px;width:164px;height:14px;background:#e4e2e3"></div>
<svg class="a" style="left:833px;top:178px" width="164" height="14" viewBox="0 0 164 14"><path d="M44.0 1 H164 V3.5 H151 L142 12.5 H54.5 Z" fill="#a8a8a8"/><path d="M44.0 1 L54.5 12.5" stroke="#8a8a8a" stroke-width=".8"/><rect x="2" y="2" width="3" height="11" fill="#9c9c9c"/><path d="M0 13.5H164" stroke="#f4f4f4" stroke-width="1"/></svg>
<div class="a" style="left:845.0px;top:180.5px;font-size:8px;color:#111;text-shadow:0 0 .4px #111;">History</div>
<div class="a" style="left:985.5px;top:182.0px;width:9px;height:9px;border-radius:50%;background:#fff;border:1px solid #444"></div><div class="a" style="left:989px;top:184.0px;width:0;height:0;border-left:3.5px solid #111;border-top:2.5px solid transparent;border-bottom:2.5px solid transparent"></div>
<div class="a" style="left:833px;top:192px;width:164px;height:13px;background:linear-gradient(#f0f0f0,#dedede 60%,#cfcfcf);border-top:1px solid #fafafa;border-bottom:1px solid #9c9c9c"></div>
<div class="a" style="left:974px;top:194.5px;width:9px;height:9px;border-radius:50%;background:radial-gradient(circle at 50% 30%,#e8eeee 0,#8f9a9a 55%,#4a5555 100%)"></div>
<div class="a" style="left:986.5px;top:194.5px;width:9px;height:9px;border-radius:50%;background:radial-gradient(circle at 50% 30%,#ffb4b4 0,#e03838 50%,#8c1414 100%)"></div>
<div class="a" style="left:833px;top:205px;width:164px;height:14px;background:#e4e2e3"></div>
<svg class="a" style="left:833px;top:205px" width="164" height="14" viewBox="0 0 164 14"><path d="M41.0 1 H164 V3.5 H151 L142 12.5 H51.5 Z" fill="#a8a8a8"/><path d="M41.0 1 L51.5 12.5" stroke="#8a8a8a" stroke-width=".8"/><path d="M38.0 1.5 H81.0 L90.0 12.5 H48.0 Z" fill="#b6b6b6"/><path d="M81.5 1.5 L90.5 12.5" stroke="#6e6e6e" stroke-width="1.4"/><path d="M84.0 1.5 H113.0 L122.0 12.5 H94.0 Z" fill="#b6b6b6"/><path d="M113.5 1.5 L122.5 12.5" stroke="#6e6e6e" stroke-width="1.4"/><rect x="2" y="2" width="3" height="11" fill="#9c9c9c"/><path d="M0 13.5H164" stroke="#f4f4f4" stroke-width="1"/></svg>
<div class="a" style="left:845.0px;top:207.5px;font-size:8px;color:#111;text-shadow:0 0 .4px #111;">Layers</div>
<div class="a" style="left:879.0px;top:207.5px;font-size:8px;color:#3c3c3c;">Channels</div>
<div class="a" style="left:925.0px;top:207.5px;font-size:8px;color:#3c3c3c;">Paths</div>
<div class="a" style="left:985.5px;top:209.0px;width:9px;height:9px;border-radius:50%;background:#fff;border:1px solid #444"></div><div class="a" style="left:989px;top:211.0px;width:0;height:0;border-left:3.5px solid #111;border-top:2.5px solid transparent;border-bottom:2.5px solid transparent"></div>
<div class="a inp" style="left:838px;top:221px;width:77px;height:13px;border-radius:2px;font-size:8px;padding:1.500px 0 0 4px">Screen</div>
<div class="a" style="left:903px;top:221px;width:12px;height:13px;border-radius:2px;background:linear-gradient(#8fb4ec,#4f7fd0 50%,#7fa8e8);border:1px solid #3a5fa8"></div>
<div class="a" style="left:906.500px;top:223.500px;width:0;height:0;border-bottom:3px solid #0a1430;border-left:2.500px solid transparent;border-right:2.500px solid transparent"></div><div class="a" style="left:906.500px;top:228.500px;width:0;height:0;border-top:3px solid #0a1430;border-left:2.500px solid transparent;border-right:2.500px solid transparent"></div>
<div class="a" style="left:922px;top:223px;font-size:8px;color:#222">Opacity:</div>
<div class="a inp" style="left:955px;top:221px;width:27px;height:13px;font-size:8px;padding:1.500px 0 0 4px">100%</div>
<div class="a abtn" style="left:982px;top:221px;width:12px;height:13px"></div><div class="a" style="left:986px;top:225px;width:0;height:0;border-left:3.500px solid #111;border-top:2.500px solid transparent;border-bottom:2.500px solid transparent"></div>
<div class="a" style="left:839px;top:242.500px;font-size:8px;color:#222">Lock:</div>
<svg class="a" style="left:862px;top:241px" width="52" height="12" viewBox="0 0 52 12"><rect x="1.500" y="1.500" width="8" height="8" fill="#fff" stroke="#444" stroke-width="1"/><path d="M1.500 1.500h4v4h-4zM5.500 5.500h4v4h-4z" fill="#ccc"/><path d="M22 1l1 1-5 6-1.500-1.200zM16.300 7l1.500 1.300c-.8 1.600-2.300 2.200-4 2 1.100-.7 1.400-2 2.500-3.300z" fill="#444"/><path d="M32 1v10M27 6h10M32 0l-1.500 2h3zM32 12l-1.500-2h3zM26 6l2-1.500v3zM38 6l-2-1.500v3z" stroke="#222" stroke-width="1" fill="#222"/><path d="M42 6h7v5h-7z" fill="#333"/><path d="M43.500 6V4a2 2 0 0 1 4 0v2" fill="none" stroke="#333" stroke-width="1.200"/></svg>
<div class="a" style="left:940px;top:242.500px;font-size:8px;color:#222">Fill:</div>
<div class="a inp" style="left:955px;top:240.500px;width:27px;height:13px;font-size:8px;padding:1.500px 0 0 4px">100%</div>
<div class="a abtn" style="left:982px;top:240.500px;width:12px;height:13px"></div><div class="a" style="left:986px;top:244.500px;width:0;height:0;border-left:3.500px solid #111;border-top:2.500px solid transparent;border-bottom:2.500px solid transparent"></div>
<div class="a" style="left:984px;top:257px;width:13px;height:458px;background:linear-gradient(90deg,#d4d4d4 0,#f4f4f4 3px,#fff 7px,#f2f2f2 10px,#d8d8d8 13px)"></div>
<div class="a" style="left:853px;top:257.500px;width:131px;height:23.500px;background:#3a55a8"></div>
<div class="a" style="left:853.500px;top:258px;width:27px;height:22.500px;border:1px solid #222;outline:1px solid #ddd;outline-offset:-2px;background:#fff repeating-conic-gradient(#d4d4d4 0 25%,#fff 0 50%) 0 0/6px 6px"></div>
<svg class="a" style="left:838.500px;top:264.5px" width="10" height="7" viewBox="0 0 10 7"><path d="M.5 3.500C2.500 .8 7.500 .8 9.500 3.500 7.500 6.200 2.500 6.200 .5 3.500z" fill="#f4f4f4" stroke="#222" stroke-width=".9"/><circle cx="5" cy="3.300" r="2" fill="#111"/><path d="M.5 3.200C2.500 .3 7.500 .3 9.500 3.200" fill="none" stroke="#111" stroke-width="1.300"/></svg>
<div class="a" style="left:884px;top:265px;font-size:8px;font-weight:bold;color:#fff">Layer 3</div>
<div class="a" style="left:854.500px;top:284px;width:25px;height:20px;border:1px solid #222;background:#fff repeating-conic-gradient(#d4d4d4 0 25%,#fff 0 50%) 0 0/6px 6px"></div>
<svg class="a" style="left:838.500px;top:289.5px" width="10" height="7" viewBox="0 0 10 7"><path d="M.5 3.500C2.500 .8 7.500 .8 9.500 3.500 7.500 6.200 2.500 6.200 .5 3.500z" fill="#f4f4f4" stroke="#222" stroke-width=".9"/><circle cx="5" cy="3.300" r="2" fill="#111"/><path d="M.5 3.200C2.500 .3 7.500 .3 9.500 3.200" fill="none" stroke="#111" stroke-width="1.300"/></svg>
<div class="a" style="left:884px;top:290px;font-size:8px;color:#111">Layer 2</div>
<div class="a" style="left:854.500px;top:309px;width:25px;height:20px;border:1px solid #222;background:#fff repeating-conic-gradient(#d4d4d4 0 25%,#fff 0 50%) 0 0/6px 6px"></div>
<svg class="a" style="left:838.500px;top:314.5px" width="10" height="7" viewBox="0 0 10 7"><path d="M.5 3.500C2.500 .8 7.500 .8 9.500 3.500 7.500 6.200 2.500 6.200 .5 3.500z" fill="#f4f4f4" stroke="#222" stroke-width=".9"/><circle cx="5" cy="3.300" r="2" fill="#111"/><path d="M.5 3.200C2.500 .3 7.500 .3 9.500 3.200" fill="none" stroke="#111" stroke-width="1.300"/></svg>
<div class="a" style="left:884px;top:315px;font-size:8px;color:#111">Layer 1</div>
<div class="a" style="left:854.500px;top:334px;width:25px;height:24px;border:1px solid #222;background:#fff"></div>
<svg class="a" style="left:855.500px;top:335px" width="23" height="22" viewBox="0 0 23 22"><path d="M1.500 13V10l1-3 1 4 1.500-7 1 5 1.500-4 1 3 1.500-6 1 7 1.500-5 1 3 1.500-4 1 5 1.500-3 1 3 1 -1v6z" fill="#777"/><path d="M1 14h21M1 17h21" stroke="#222" stroke-width="1"/><path d="M11.500 18l-2 2.500h4z" fill="#222"/></svg>
<svg class="a" style="left:838.500px;top:343.0px" width="10" height="7" viewBox="0 0 10 7"><path d="M.5 3.500C2.500 .8 7.500 .8 9.500 3.500 7.500 6.200 2.500 6.200 .5 3.500z" fill="#f4f4f4" stroke="#222" stroke-width=".9"/><circle cx="5" cy="3.300" r="2" fill="#111"/><path d="M.5 3.200C2.500 .3 7.500 .3 9.500 3.200" fill="none" stroke="#111" stroke-width="1.300"/></svg>
<svg class="a" style="left:883px;top:340px" width="7" height="12" viewBox="0 0 7 12"><rect x=".5" y=".5" width="6" height="11" rx="2" fill="#bdbdbd" stroke="#999"/><path d="M3.500 2.500c1.500 0 1.500 2.500 0 2.500s-1.500 2.500 0 2.500" fill="none" stroke="#555" stroke-width="1"/></svg>
<div class="a" style="left:891.500px;top:337px;width:26px;height:19.500px;border:1px solid #222;background:#fff"></div>
<div class="a" style="left:921px;top:342.5px;font-size:8px;color:#111">Levels 1</div>
<div class="a" style="left:854.500px;top:364.500px;width:26px;height:20px;border:1px solid #3a3a3a;background:linear-gradient(#1c7a82,#2596a0 60%,#1c8690)"></div>
<svg class="a" style="left:855.500px;top:365.500px" width="24" height="18" viewBox="0 0 24 18"><path d="M7 8c1-2 4-3 6-2 0 2-1 4-3 5-2 0-3-1-3-3z" fill="#0a1418"/><path d="M11 10c2 0 3 2 3 4l-2 4H8l1-4z" fill="#c8dcdc"/><path d="M10 11l-5 7M13 12l5 4" stroke="#b4d0d0" stroke-width="1.200"/></svg>
<svg class="a" style="left:838.500px;top:370.0px" width="10" height="7" viewBox="0 0 10 7"><path d="M.5 3.500C2.500 .8 7.500 .8 9.500 3.500 7.500 6.200 2.500 6.200 .5 3.500z" fill="#f4f4f4" stroke="#222" stroke-width=".9"/><circle cx="5" cy="3.300" r="2" fill="#111"/><path d="M.5 3.200C2.500 .3 7.500 .3 9.500 3.200" fill="none" stroke="#111" stroke-width="1.300"/></svg>
<div class="a" style="left:884px;top:370px;font-size:8px;font-style:italic;color:#111">Background</div>
<svg class="a" style="left:964px;top:369px" width="8" height="9" viewBox="0 0 8 9"><path d="M.7 4h6.600v4.300H.7z" fill="#f4f4f4" stroke="#333" stroke-width=".9"/><path d="M2 4V2.800a2 2 0 0 1 4 0V4" fill="none" stroke="#333" stroke-width="1"/><path d="M4 5.500v1.500" stroke="#333"/></svg>
<svg class="a" style="left:836px;top:713px" width="150" height="13" viewBox="0 0 150 13"><g fill="none" stroke="#8a8a8a" stroke-width="1.300"><ellipse cx="8" cy="6.500" rx="3.500" ry="2.300"/><ellipse cx="14" cy="6.500" rx="3.500" ry="2.300"/></g><circle cx="33" cy="6" r="4.500" fill="#444"/><text x="33" y="9" font-size="7" font-style="italic" font-family="Liberation Serif" fill="#fff" text-anchor="middle">f</text><rect x="49" y="2" width="10" height="9" fill="#aaa" stroke="#555"/><circle cx="54" cy="6.500" r="2.500" fill="#fff"/><circle cx="75" cy="6" r="4.500" fill="#fff" stroke="#444"/><path d="M75 1.500a4.500 4.500 0 0 0 0 9z" fill="#333"/><path d="M91 3h4l1 1.500h5V11H91z" fill="#eee" stroke="#777"/><path d="M112 2.500h8l2 2V11h-10z" fill="#fff" stroke="#666"/><path d="M134 4h7l-1 7h-5z" fill="#ccc" stroke="#555"/><path d="M133 3.500h9" stroke="#444" stroke-width="1.500"/></svg>
<svg class="a" style="left:986px;top:715px" width="10" height="10" viewBox="0 0 10 10"><path d="M1 9L9 1M4 9L9 4M7 9L9 7" stroke="#666" stroke-width="1"/></svg>
<div class="a" style="left:870px;top:715.500px;font-size:12.500px;font-weight:bold;color:#fff;letter-spacing:1px;text-shadow:-1px -1px 0 #000,1px -1px 0 #000,-1px 1px 0 #000,1px 1px 0 #000,0 1px 0 #000,0 -1px 0 #000,1px 0 0 #000,-1px 0 0 #000,1.500px 1.500px 0 #000">Photoshop-free.ru</div>
</div></body></html>
